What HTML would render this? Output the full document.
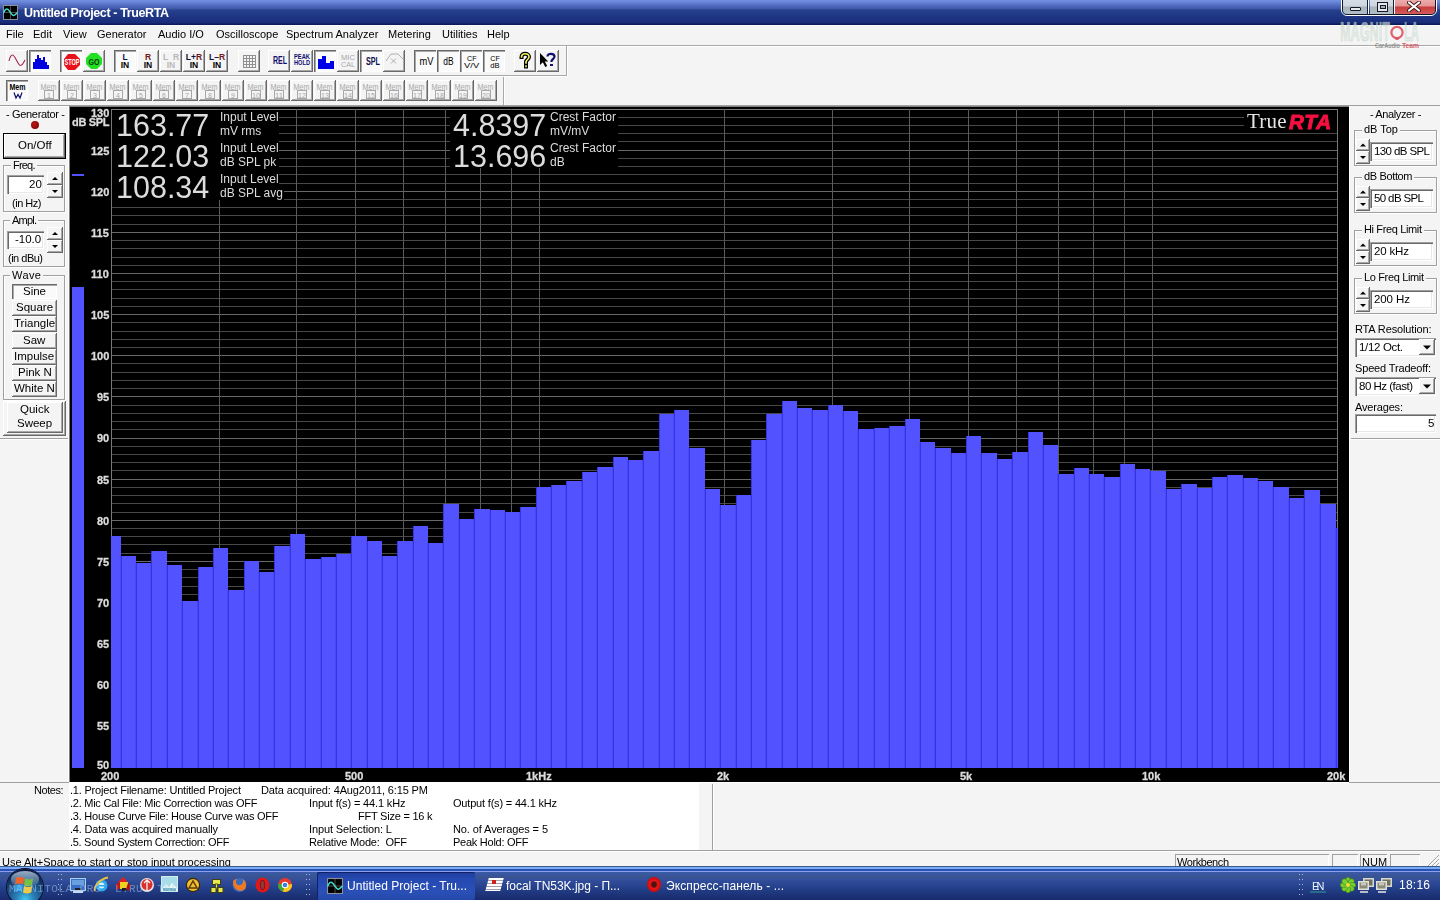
<!DOCTYPE html>
<html><head><meta charset="utf-8"><title>Untitled Project - TrueRTA</title>
<style>*{margin:0;padding:0;box-sizing:border-box}
html,body{width:1440px;height:900px;overflow:hidden}
body{position:relative;background:#f4f4f4;font-family:"Liberation Sans",sans-serif;font-size:11px;color:#000}
.a{position:absolute}
.t{position:absolute;white-space:pre;will-change:transform}
svg{display:block}</style></head>
<body>
<div class="a" style="left:0px;top:0px;width:1440px;height:25px;background:linear-gradient(#7391e3 0px,#6a86d8 2px,#556fc4 5px,#3e56a6 9px,#26408c 10px,#213a88 14px,#1c3280 19px,#182c78 23px,#0e1a5c 24px,#0e1a5c 25px);"></div>
<svg class="a" style="left:3px;top:5px" width="15" height="15" viewBox="0 0 15 15"><rect x="0" y="0" width="15" height="15" fill="#8a8f9a"/><rect x="1" y="1" width="13" height="13" fill="#000"/><line x1="7.5" y1="1" x2="7.5" y2="14" stroke="#6b5b4b" stroke-width="0.8"/><line x1="1" y1="7.5" x2="14" y2="7.5" stroke="#6b5b4b" stroke-width="0.8"/><path d="M0.5,8 C2,4 3.5,3.5 5,4.5 C7,6 8.5,10.5 10.5,10.5 C12,10.5 13,8.5 14.5,7.5" fill="none" stroke="#40e0d0" stroke-width="1.4"/></svg>
<div class="a" style="left:1341px;top:-3px;width:96px;height:19px;border:1px solid #fff;border-radius:0 0 6px 6px;overflow:hidden;">
<div class="a" style="left:0;top:0;width:94px;height:17px;border:1px solid #101828;border-top:none;border-radius:0 0 5px 5px;overflow:hidden;">
<div class="a" style="left:0;top:0;width:25px;height:17px;background:linear-gradient(#d8e0e8 0,#cdd6de 8px,#a8b4bc 9px,#b4c0c8 17px);border-right:1px solid #182030;box-shadow:1px 0 #fff;"></div>
<div class="a" style="left:27px;top:0;width:24px;height:17px;background:linear-gradient(#d8e0e8 0,#cdd6de 8px,#a8b4bc 9px,#b4c0c8 17px);border-right:1px solid #182030;box-shadow:1px 0 #fff;"></div>
<div class="a" style="left:52px;top:0;width:42px;height:17px;background:linear-gradient(#f0b4b4 0,#e49494 8px,#c83c3c 9px,#d86060 17px);"></div>
<div class="a" style="left:7px;top:9px;width:11px;height:4px;background:#e0e8ec;border:1px solid #181828;border-radius:1px;"></div>
<div class="a" style="left:34px;top:4px;width:11px;height:10px;background:#e0e8ec;border:1px solid #181828;"></div>
<div class="a" style="left:36.5px;top:6.5px;width:6px;height:4px;background:#a8b0b8;border:1px solid #181828;"></div>
</div></div>
<svg class="a" style="left:1407px;top:1px" width="14" height="11" viewBox="0 0 14 11"><path d="M2,1.5 L12,9.5 M12,1.5 L2,9.5" stroke="#401818" stroke-width="4" stroke-linecap="round"/><path d="M2,1.5 L12,9.5 M12,1.5 L2,9.5" stroke="#fff" stroke-width="2.2" stroke-linecap="round"/></svg>
<div class="a" style="left:0px;top:25px;width:1440px;height:1px;background:#fafafc;"></div>
<div class="a" style="left:0px;top:26px;width:1440px;height:1px;background:#f4f4ee;"></div>
<div class="a" style="left:0px;top:45px;width:1440px;height:1px;background:#a8a8a8;"></div>
<div class="a" style="left:0px;top:46px;width:1440px;height:1px;background:#fff;"></div>
<svg class="a" style="left:1336px;top:16px" width="90" height="34" viewBox="0 0 90 34">
<text x="4" y="24.5" font-family="Liberation Sans" font-weight="bold" font-size="28" textLength="50" lengthAdjust="spacingAndGlyphs" fill="rgba(214,232,220,0.6)" stroke="rgba(150,170,160,0.45)" stroke-width="0.6">MAGNIT</text>
<text x="68" y="24.5" font-family="Liberation Sans" font-weight="bold" font-size="28" textLength="15" lengthAdjust="spacingAndGlyphs" fill="rgba(214,232,220,0.6)" stroke="rgba(150,170,160,0.45)" stroke-width="0.6">LA</text>
<circle cx="61" cy="16.5" r="5.6" fill="none" stroke="rgba(222,80,95,0.9)" stroke-width="2.2"/>
<rect x="59.5" y="21" width="3" height="3" fill="rgba(222,80,95,0.9)"/>
<text x="39" y="31.5" font-family="Liberation Sans" font-weight="bold" font-size="7" textLength="25" lengthAdjust="spacingAndGlyphs" fill="rgba(130,130,130,0.85)">CarAudio</text>
<text x="66" y="31.5" font-family="Liberation Sans" font-weight="bold" font-size="7" textLength="17" lengthAdjust="spacingAndGlyphs" fill="rgba(210,70,85,0.9)">Team</text>
</svg>
<div class="a" style="left:6px;top:50px;width:22px;height:22px;background:#f4f4f4;box-shadow:inset -1px -1px #696969,inset 1px 1px #fff,inset -2px -2px #a8a8a8;"><svg class="a" style="left:0px;top:0px" width="22" height="22" viewBox="0 0 22 22" shape-rendering="crispEdges"><path d="M3,11 C4,6.5 5,5 6.5,5 C9,5 12,15.5 14.5,15.5 C16.5,15.5 18,12 19,10" fill="none" stroke="#a02850" stroke-width="1.1" shape-rendering="auto"/></svg></div>
<div class="a" style="left:29px;top:50px;width:22px;height:22px;background:#fafafa;box-shadow:inset 1px 1px #696969,inset 2px 2px #a8a8a8,inset -1px -1px #fff;"><svg class="a" style="left:0px;top:0px" width="22" height="22" viewBox="0 0 22 22" shape-rendering="crispEdges"><path d="M4,19 V12 H6 V9 H8 V5 H10 V8 H12 V10 H14 V7 H16 V12 H18 V15 H20 V19 Z" fill="#0000e0"/></svg></div>
<div class="a" style="left:60px;top:50px;width:22px;height:22px;background:#fafafa;box-shadow:inset 1px 1px #696969,inset 2px 2px #a8a8a8,inset -1px -1px #fff;"><svg class="a" style="left:0px;top:0px" width="22" height="22" viewBox="0 0 22 22" shape-rendering="crispEdges"><polygon points="8,4 15,4 20,9 20,15 15,20 8,20 4,15 4,9" fill="#e8101a" shape-rendering="auto"/><text x="4.5" y="15" font-family="Liberation Sans" font-weight="bold" font-size="8.5" fill="#fff" textLength="15" lengthAdjust="spacingAndGlyphs">STOP</text></svg></div>
<div class="a" style="left:83px;top:50px;width:22px;height:22px;background:#f4f4f4;box-shadow:inset -1px -1px #696969,inset 1px 1px #fff,inset -2px -2px #a8a8a8;"><svg class="a" style="left:0px;top:0px" width="22" height="22" viewBox="0 0 22 22" shape-rendering="crispEdges"><polygon points="8,3 14,3 19,8 19,14 14,19 8,19 3,14 3,8" fill="#22e022" shape-rendering="auto"/><text x="5.5" y="14.8" font-family="Liberation Sans" font-weight="bold" font-size="9" fill="#083808" textLength="11" lengthAdjust="spacingAndGlyphs">GO</text></svg></div>
<div class="a" style="left:114px;top:50px;width:22px;height:22px;background:#fafafa;box-shadow:inset 1px 1px #696969,inset 2px 2px #a8a8a8,inset -1px -1px #fff;"><svg class="a" style="left:0px;top:0px" width="22" height="22" viewBox="0 0 22 22" shape-rendering="crispEdges"><text x="11" y="10" font-family="Liberation Sans" font-weight="bold" font-size="8.5" text-anchor="middle" shape-rendering="auto"><tspan fill="#101050">L</tspan></text><text x="11" y="18" font-family="Liberation Sans" font-weight="bold" font-size="8.5" fill="#000" text-anchor="middle">IN</text></svg></div>
<div class="a" style="left:137px;top:50px;width:22px;height:22px;background:#f4f4f4;box-shadow:inset -1px -1px #696969,inset 1px 1px #fff,inset -2px -2px #a8a8a8;"><svg class="a" style="left:0px;top:0px" width="22" height="22" viewBox="0 0 22 22" shape-rendering="crispEdges"><text x="11" y="10" font-family="Liberation Sans" font-weight="bold" font-size="8.5" text-anchor="middle" shape-rendering="auto"><tspan fill="#701818">R</tspan></text><text x="11" y="18" font-family="Liberation Sans" font-weight="bold" font-size="8.5" fill="#000" text-anchor="middle">IN</text></svg></div>
<div class="a" style="left:160px;top:50px;width:22px;height:22px;background:#f4f4f4;box-shadow:inset -1px -1px #696969,inset 1px 1px #fff,inset -2px -2px #a8a8a8;"><svg class="a" style="left:0px;top:0px" width="22" height="22" viewBox="0 0 22 22" shape-rendering="crispEdges"><text x="11" y="10" font-family="Liberation Sans" font-size="8.5" fill="#b8b8b8" text-anchor="middle" font-weight="bold">L&#160;&#160;R</text><text x="11" y="18" font-family="Liberation Sans" font-weight="bold" font-size="8.5" fill="#b8b8b8" text-anchor="middle">IN</text></svg></div>
<div class="a" style="left:183px;top:50px;width:22px;height:22px;background:#f4f4f4;box-shadow:inset -1px -1px #696969,inset 1px 1px #fff,inset -2px -2px #a8a8a8;"><svg class="a" style="left:0px;top:0px" width="22" height="22" viewBox="0 0 22 22" shape-rendering="crispEdges"><text x="11" y="10" font-family="Liberation Sans" font-weight="bold" font-size="8.5" text-anchor="middle" shape-rendering="auto"><tspan fill="#101040">L+</tspan><tspan fill="#701818">R</tspan></text><text x="11" y="18" font-family="Liberation Sans" font-weight="bold" font-size="8.5" fill="#000" text-anchor="middle">IN</text></svg></div>
<div class="a" style="left:206px;top:50px;width:22px;height:22px;background:#f4f4f4;box-shadow:inset -1px -1px #696969,inset 1px 1px #fff,inset -2px -2px #a8a8a8;"><svg class="a" style="left:0px;top:0px" width="22" height="22" viewBox="0 0 22 22" shape-rendering="crispEdges"><text x="11" y="10" font-family="Liberation Sans" font-weight="bold" font-size="8.5" text-anchor="middle" shape-rendering="auto"><tspan fill="#101040">L–</tspan><tspan fill="#701818">R</tspan></text><text x="11" y="18" font-family="Liberation Sans" font-weight="bold" font-size="8.5" fill="#000" text-anchor="middle">IN</text></svg></div>
<div class="a" style="left:238px;top:50px;width:22px;height:22px;background:#f4f4f4;box-shadow:inset -1px -1px #696969,inset 1px 1px #fff,inset -2px -2px #a8a8a8;"><svg class="a" style="left:0px;top:0px" width="22" height="22" viewBox="0 0 22 22" shape-rendering="crispEdges"><rect x="5" y="5" width="1" height="13" fill="#909090"/><rect x="8" y="5" width="1" height="13" fill="#909090"/><rect x="11" y="5" width="1" height="13" fill="#909090"/><rect x="14" y="5" width="1" height="13" fill="#909090"/><rect x="17" y="5" width="1" height="13" fill="#909090"/><rect x="5" y="5" width="13" height="1" fill="#909090"/><rect x="5" y="8" width="13" height="1" fill="#909090"/><rect x="5" y="11" width="13" height="1" fill="#909090"/><rect x="5" y="14" width="13" height="1" fill="#909090"/><rect x="5" y="17" width="13" height="1" fill="#909090"/></svg></div>
<div class="a" style="left:268px;top:50px;width:22px;height:22px;background:#f4f4f4;box-shadow:inset -1px -1px #696969,inset 1px 1px #fff,inset -2px -2px #a8a8a8;"><svg class="a" style="left:0px;top:0px" width="22" height="22" viewBox="0 0 22 22" shape-rendering="crispEdges"><text x="5" y="14.2" font-family="Liberation Sans" font-weight="bold" font-size="10.5" fill="#101070" text-anchor="start" textLength="14" lengthAdjust="spacingAndGlyphs">REL</text></svg></div>
<div class="a" style="left:291px;top:50px;width:22px;height:22px;background:#f4f4f4;box-shadow:inset -1px -1px #696969,inset 1px 1px #fff,inset -2px -2px #a8a8a8;"><svg class="a" style="left:0px;top:0px" width="22" height="22" viewBox="0 0 22 22" shape-rendering="crispEdges"><text x="3" y="9.3" font-family="Liberation Sans" font-weight="bold" font-size="6.5" fill="#101070" text-anchor="start" textLength="16" lengthAdjust="spacingAndGlyphs">PEAK</text><text x="3" y="15.3" font-family="Liberation Sans" font-weight="bold" font-size="6.5" fill="#101070" text-anchor="start" textLength="16" lengthAdjust="spacingAndGlyphs">HOLD</text></svg></div>
<div class="a" style="left:314px;top:50px;width:22px;height:22px;background:#fafafa;box-shadow:inset 1px 1px #696969,inset 2px 2px #a8a8a8,inset -1px -1px #fff;"><svg class="a" style="left:0px;top:0px" width="22" height="22" viewBox="0 0 22 22" shape-rendering="crispEdges"><path d="M4,19 V9 H8 V6 H12 V13 H16 V11 H20 V19 Z" fill="#0000e8"/></svg></div>
<div class="a" style="left:337px;top:50px;width:22px;height:22px;background:#f4f4f4;box-shadow:inset -1px -1px #696969,inset 1px 1px #fff,inset -2px -2px #a8a8a8;"><svg class="a" style="left:0px;top:0px" width="22" height="22" viewBox="0 0 22 22" shape-rendering="crispEdges"><text x="4" y="10.2" font-family="Liberation Sans" font-weight="normal" font-size="7" fill="#a8a8a8" text-anchor="start" textLength="14" lengthAdjust="spacingAndGlyphs">MIC</text><text x="4" y="17.3" font-family="Liberation Sans" font-weight="normal" font-size="7" fill="#a8a8a8" text-anchor="start" textLength="14" lengthAdjust="spacingAndGlyphs">CAL</text></svg></div>
<div class="a" style="left:360px;top:50px;width:22px;height:22px;background:#fafafa;box-shadow:inset 1px 1px #696969,inset 2px 2px #a8a8a8,inset -1px -1px #fff;"><svg class="a" style="left:0px;top:0px" width="22" height="22" viewBox="0 0 22 22" shape-rendering="crispEdges"><text x="6" y="15.2" font-family="Liberation Sans" font-weight="bold" font-size="10" fill="#101050" text-anchor="start" textLength="14" lengthAdjust="spacingAndGlyphs">SPL</text></svg></div>
<div class="a" style="left:383px;top:50px;width:22px;height:22px;background:#f4f4f4;box-shadow:inset -1px -1px #696969,inset 1px 1px #fff,inset -2px -2px #a8a8a8;"><svg class="a" style="left:0px;top:0px" width="22" height="22" viewBox="0 0 22 22" shape-rendering="crispEdges"><path d="M3,11 L8,4 L15,4 L20,9" fill="none" stroke="#b0b0b0" stroke-width="1" shape-rendering="auto"/><path d="M8,8.5 L13,13.5 M13,8.5 L8,13.5" stroke="#b0b0b0" stroke-width="1" shape-rendering="auto"/></svg></div>
<div class="a" style="left:414px;top:50px;width:22px;height:22px;background:#fafafa;box-shadow:inset 1px 1px #696969,inset 2px 2px #a8a8a8,inset -1px -1px #fff;"><svg class="a" style="left:0px;top:0px" width="22" height="22" viewBox="0 0 22 22" shape-rendering="crispEdges"><text x="5.5" y="15.2" font-family="Liberation Sans" font-weight="normal" font-size="11" fill="#000" text-anchor="start" textLength="14" lengthAdjust="spacingAndGlyphs">mV</text></svg></div>
<div class="a" style="left:437px;top:50px;width:22px;height:22px;background:#fafafa;box-shadow:inset 1px 1px #696969,inset 2px 2px #a8a8a8,inset -1px -1px #fff;"><svg class="a" style="left:0px;top:0px" width="22" height="22" viewBox="0 0 22 22" shape-rendering="crispEdges"><text x="6.3" y="15.2" font-family="Liberation Sans" font-weight="normal" font-size="11" fill="#000" text-anchor="start" textLength="10.3" lengthAdjust="spacingAndGlyphs">dB</text></svg></div>
<div class="a" style="left:460px;top:50px;width:22px;height:22px;background:#fafafa;box-shadow:inset 1px 1px #696969,inset 2px 2px #a8a8a8,inset -1px -1px #fff;"><svg class="a" style="left:0px;top:0px" width="22" height="22" viewBox="0 0 22 22" shape-rendering="crispEdges"><text x="7" y="11" font-family="Liberation Sans" font-weight="normal" font-size="8" fill="#000" text-anchor="start" textLength="9.5" lengthAdjust="spacingAndGlyphs">CF</text><text x="4.1" y="18.2" font-family="Liberation Sans" font-weight="normal" font-size="8" fill="#000" text-anchor="start" textLength="15" lengthAdjust="spacingAndGlyphs">V/V</text></svg></div>
<div class="a" style="left:483px;top:50px;width:22px;height:22px;background:#fafafa;box-shadow:inset 1px 1px #696969,inset 2px 2px #a8a8a8,inset -1px -1px #fff;"><svg class="a" style="left:0px;top:0px" width="22" height="22" viewBox="0 0 22 22" shape-rendering="crispEdges"><text x="7.3" y="11" font-family="Liberation Sans" font-weight="normal" font-size="8" fill="#000" text-anchor="start" textLength="9.5" lengthAdjust="spacingAndGlyphs">CF</text><text x="7.3" y="18.2" font-family="Liberation Sans" font-weight="normal" font-size="8" fill="#000" text-anchor="start" textLength="9.3" lengthAdjust="spacingAndGlyphs">dB</text></svg></div>
<div class="a" style="left:514px;top:50px;width:22px;height:22px;background:#f4f4f4;box-shadow:inset -1px -1px #696969,inset 1px 1px #fff,inset -2px -2px #a8a8a8;"><svg class="a" style="left:0px;top:0px" width="22" height="22" viewBox="0 0 22 22" shape-rendering="crispEdges"><path d="M7.5,7 C7.5,4.5 9.5,3.8 11,3.8 C13.5,3.8 15,5.2 15,7 C15,9 12.5,10 12,11.5 L12,13 M12,16 L12,16.5" fill="none" stroke="#000" stroke-width="4" stroke-linecap="square" shape-rendering="auto"/><path d="M7.5,7 C7.5,4.5 9.5,3.8 11,3.8 C13.5,3.8 15,5.2 15,7 C15,9 12.5,10 12,11.5 L12,13 M12,16 L12,16.5" fill="none" stroke="#f4f45a" stroke-width="1.6" stroke-linecap="square" shape-rendering="auto"/></svg></div>
<div class="a" style="left:537px;top:50px;width:22px;height:22px;background:#f4f4f4;box-shadow:inset -1px -1px #696969,inset 1px 1px #fff,inset -2px -2px #a8a8a8;"><svg class="a" style="left:0px;top:0px" width="22" height="22" viewBox="0 0 22 22" shape-rendering="crispEdges"><path d="M3,3 L3,15 L5.8,12.3 L8.3,17 L10.2,16 L7.8,11.5 L11.2,11.5 Z" fill="#000" shape-rendering="auto"/><path d="M10.5,6.5 C10.5,4.5 12.2,3.8 14,3.8 C16.2,3.8 17.5,5 17.5,6.6 C17.5,8.6 15,9.2 14.5,11 L14.5,12" fill="none" stroke="#101070" stroke-width="2.2" shape-rendering="auto"/><rect x="13" y="13.5" width="3" height="2.2" fill="#101070"/></svg></div>
<div class="a" style="left:0px;top:75px;width:567px;height:1px;background:#a8a8a8;"></div>
<div class="a" style="left:0px;top:76px;width:567px;height:1px;background:#fff;"></div>
<div class="a" style="left:566px;top:46px;width:1px;height:30px;background:#a8a8a8;"></div>
<div class="a" style="left:567px;top:46px;width:1px;height:30px;background:#fff;"></div>
<div class="a" style="left:6px;top:80px;width:22px;height:21px;background:#fafafa;box-shadow:inset 1px 1px #696969,inset 2px 2px #a8a8a8,inset -1px -1px #fff;"><svg class="a" style="left:0px;top:0px" width="22" height="21" viewBox="0 0 22 21" shape-rendering="crispEdges"><text x="11.5" y="10" font-family="Liberation Sans" font-weight="bold" font-size="8.5" fill="#000" text-anchor="middle" textLength="16" lengthAdjust="spacingAndGlyphs">Mem</text><path d="M8,12.5 L10,18 L12,14.5 L14,18 L16,12.5" fill="none" stroke="#101070" stroke-width="1.2" shape-rendering="auto"/></svg></div>
<div class="a" style="left:38px;top:80px;width:22px;height:21px;background:#f4f4f4;box-shadow:inset -1px -1px #696969,inset 1px 1px #fff,inset -2px -2px #a8a8a8;"><svg class="a" style="left:0px;top:0px" width="22" height="21" viewBox="0 0 22 21" shape-rendering="crispEdges"><text x="10.5" y="9.5" font-family="Liberation Sans" font-size="8.5" fill="#a8a8a8" text-anchor="middle" textLength="16" lengthAdjust="spacingAndGlyphs">Mem</text><rect x="6.5" y="10.5" width="9" height="8" fill="none" stroke="#a8a8a8" stroke-width="1"/><text x="11" y="17.5" font-family="Liberation Sans" font-size="7" fill="#a8a8a8" text-anchor="middle" >1</text></svg></div>
<div class="a" style="left:61px;top:80px;width:22px;height:21px;background:#f4f4f4;box-shadow:inset -1px -1px #696969,inset 1px 1px #fff,inset -2px -2px #a8a8a8;"><svg class="a" style="left:0px;top:0px" width="22" height="21" viewBox="0 0 22 21" shape-rendering="crispEdges"><text x="10.5" y="9.5" font-family="Liberation Sans" font-size="8.5" fill="#a8a8a8" text-anchor="middle" textLength="16" lengthAdjust="spacingAndGlyphs">Mem</text><rect x="6.5" y="10.5" width="9" height="8" fill="none" stroke="#a8a8a8" stroke-width="1"/><text x="11" y="17.5" font-family="Liberation Sans" font-size="7" fill="#a8a8a8" text-anchor="middle" >2</text></svg></div>
<div class="a" style="left:84px;top:80px;width:22px;height:21px;background:#f4f4f4;box-shadow:inset -1px -1px #696969,inset 1px 1px #fff,inset -2px -2px #a8a8a8;"><svg class="a" style="left:0px;top:0px" width="22" height="21" viewBox="0 0 22 21" shape-rendering="crispEdges"><text x="10.5" y="9.5" font-family="Liberation Sans" font-size="8.5" fill="#a8a8a8" text-anchor="middle" textLength="16" lengthAdjust="spacingAndGlyphs">Mem</text><rect x="6.5" y="10.5" width="9" height="8" fill="none" stroke="#a8a8a8" stroke-width="1"/><text x="11" y="17.5" font-family="Liberation Sans" font-size="7" fill="#a8a8a8" text-anchor="middle" >3</text></svg></div>
<div class="a" style="left:107px;top:80px;width:22px;height:21px;background:#f4f4f4;box-shadow:inset -1px -1px #696969,inset 1px 1px #fff,inset -2px -2px #a8a8a8;"><svg class="a" style="left:0px;top:0px" width="22" height="21" viewBox="0 0 22 21" shape-rendering="crispEdges"><text x="10.5" y="9.5" font-family="Liberation Sans" font-size="8.5" fill="#a8a8a8" text-anchor="middle" textLength="16" lengthAdjust="spacingAndGlyphs">Mem</text><rect x="6.5" y="10.5" width="9" height="8" fill="none" stroke="#a8a8a8" stroke-width="1"/><text x="11" y="17.5" font-family="Liberation Sans" font-size="7" fill="#a8a8a8" text-anchor="middle" >4</text></svg></div>
<div class="a" style="left:130px;top:80px;width:22px;height:21px;background:#f4f4f4;box-shadow:inset -1px -1px #696969,inset 1px 1px #fff,inset -2px -2px #a8a8a8;"><svg class="a" style="left:0px;top:0px" width="22" height="21" viewBox="0 0 22 21" shape-rendering="crispEdges"><text x="10.5" y="9.5" font-family="Liberation Sans" font-size="8.5" fill="#a8a8a8" text-anchor="middle" textLength="16" lengthAdjust="spacingAndGlyphs">Mem</text><rect x="6.5" y="10.5" width="9" height="8" fill="none" stroke="#a8a8a8" stroke-width="1"/><text x="11" y="17.5" font-family="Liberation Sans" font-size="7" fill="#a8a8a8" text-anchor="middle" >5</text></svg></div>
<div class="a" style="left:153px;top:80px;width:22px;height:21px;background:#f4f4f4;box-shadow:inset -1px -1px #696969,inset 1px 1px #fff,inset -2px -2px #a8a8a8;"><svg class="a" style="left:0px;top:0px" width="22" height="21" viewBox="0 0 22 21" shape-rendering="crispEdges"><text x="10.5" y="9.5" font-family="Liberation Sans" font-size="8.5" fill="#a8a8a8" text-anchor="middle" textLength="16" lengthAdjust="spacingAndGlyphs">Mem</text><rect x="6.5" y="10.5" width="9" height="8" fill="none" stroke="#a8a8a8" stroke-width="1"/><text x="11" y="17.5" font-family="Liberation Sans" font-size="7" fill="#a8a8a8" text-anchor="middle" >6</text></svg></div>
<div class="a" style="left:176px;top:80px;width:22px;height:21px;background:#f4f4f4;box-shadow:inset -1px -1px #696969,inset 1px 1px #fff,inset -2px -2px #a8a8a8;"><svg class="a" style="left:0px;top:0px" width="22" height="21" viewBox="0 0 22 21" shape-rendering="crispEdges"><text x="10.5" y="9.5" font-family="Liberation Sans" font-size="8.5" fill="#a8a8a8" text-anchor="middle" textLength="16" lengthAdjust="spacingAndGlyphs">Mem</text><rect x="6.5" y="10.5" width="9" height="8" fill="none" stroke="#a8a8a8" stroke-width="1"/><text x="11" y="17.5" font-family="Liberation Sans" font-size="7" fill="#a8a8a8" text-anchor="middle" >7</text></svg></div>
<div class="a" style="left:199px;top:80px;width:22px;height:21px;background:#f4f4f4;box-shadow:inset -1px -1px #696969,inset 1px 1px #fff,inset -2px -2px #a8a8a8;"><svg class="a" style="left:0px;top:0px" width="22" height="21" viewBox="0 0 22 21" shape-rendering="crispEdges"><text x="10.5" y="9.5" font-family="Liberation Sans" font-size="8.5" fill="#a8a8a8" text-anchor="middle" textLength="16" lengthAdjust="spacingAndGlyphs">Mem</text><rect x="6.5" y="10.5" width="9" height="8" fill="none" stroke="#a8a8a8" stroke-width="1"/><text x="11" y="17.5" font-family="Liberation Sans" font-size="7" fill="#a8a8a8" text-anchor="middle" >8</text></svg></div>
<div class="a" style="left:222px;top:80px;width:22px;height:21px;background:#f4f4f4;box-shadow:inset -1px -1px #696969,inset 1px 1px #fff,inset -2px -2px #a8a8a8;"><svg class="a" style="left:0px;top:0px" width="22" height="21" viewBox="0 0 22 21" shape-rendering="crispEdges"><text x="10.5" y="9.5" font-family="Liberation Sans" font-size="8.5" fill="#a8a8a8" text-anchor="middle" textLength="16" lengthAdjust="spacingAndGlyphs">Mem</text><rect x="6.5" y="10.5" width="9" height="8" fill="none" stroke="#a8a8a8" stroke-width="1"/><text x="11" y="17.5" font-family="Liberation Sans" font-size="7" fill="#a8a8a8" text-anchor="middle" >9</text></svg></div>
<div class="a" style="left:245px;top:80px;width:22px;height:21px;background:#f4f4f4;box-shadow:inset -1px -1px #696969,inset 1px 1px #fff,inset -2px -2px #a8a8a8;"><svg class="a" style="left:0px;top:0px" width="22" height="21" viewBox="0 0 22 21" shape-rendering="crispEdges"><text x="10.5" y="9.5" font-family="Liberation Sans" font-size="8.5" fill="#a8a8a8" text-anchor="middle" textLength="16" lengthAdjust="spacingAndGlyphs">Mem</text><rect x="6.5" y="10.5" width="9" height="8" fill="none" stroke="#a8a8a8" stroke-width="1"/><text x="11" y="17.5" font-family="Liberation Sans" font-size="7" fill="#a8a8a8" text-anchor="middle" textLength="8" lengthAdjust="spacingAndGlyphs">10</text></svg></div>
<div class="a" style="left:268px;top:80px;width:22px;height:21px;background:#f4f4f4;box-shadow:inset -1px -1px #696969,inset 1px 1px #fff,inset -2px -2px #a8a8a8;"><svg class="a" style="left:0px;top:0px" width="22" height="21" viewBox="0 0 22 21" shape-rendering="crispEdges"><text x="10.5" y="9.5" font-family="Liberation Sans" font-size="8.5" fill="#a8a8a8" text-anchor="middle" textLength="16" lengthAdjust="spacingAndGlyphs">Mem</text><rect x="6.5" y="10.5" width="9" height="8" fill="none" stroke="#a8a8a8" stroke-width="1"/><text x="11" y="17.5" font-family="Liberation Sans" font-size="7" fill="#a8a8a8" text-anchor="middle" textLength="8" lengthAdjust="spacingAndGlyphs">11</text></svg></div>
<div class="a" style="left:291px;top:80px;width:22px;height:21px;background:#f4f4f4;box-shadow:inset -1px -1px #696969,inset 1px 1px #fff,inset -2px -2px #a8a8a8;"><svg class="a" style="left:0px;top:0px" width="22" height="21" viewBox="0 0 22 21" shape-rendering="crispEdges"><text x="10.5" y="9.5" font-family="Liberation Sans" font-size="8.5" fill="#a8a8a8" text-anchor="middle" textLength="16" lengthAdjust="spacingAndGlyphs">Mem</text><rect x="6.5" y="10.5" width="9" height="8" fill="none" stroke="#a8a8a8" stroke-width="1"/><text x="11" y="17.5" font-family="Liberation Sans" font-size="7" fill="#a8a8a8" text-anchor="middle" textLength="8" lengthAdjust="spacingAndGlyphs">12</text></svg></div>
<div class="a" style="left:314px;top:80px;width:22px;height:21px;background:#f4f4f4;box-shadow:inset -1px -1px #696969,inset 1px 1px #fff,inset -2px -2px #a8a8a8;"><svg class="a" style="left:0px;top:0px" width="22" height="21" viewBox="0 0 22 21" shape-rendering="crispEdges"><text x="10.5" y="9.5" font-family="Liberation Sans" font-size="8.5" fill="#a8a8a8" text-anchor="middle" textLength="16" lengthAdjust="spacingAndGlyphs">Mem</text><rect x="6.5" y="10.5" width="9" height="8" fill="none" stroke="#a8a8a8" stroke-width="1"/><text x="11" y="17.5" font-family="Liberation Sans" font-size="7" fill="#a8a8a8" text-anchor="middle" textLength="8" lengthAdjust="spacingAndGlyphs">13</text></svg></div>
<div class="a" style="left:337px;top:80px;width:22px;height:21px;background:#f4f4f4;box-shadow:inset -1px -1px #696969,inset 1px 1px #fff,inset -2px -2px #a8a8a8;"><svg class="a" style="left:0px;top:0px" width="22" height="21" viewBox="0 0 22 21" shape-rendering="crispEdges"><text x="10.5" y="9.5" font-family="Liberation Sans" font-size="8.5" fill="#a8a8a8" text-anchor="middle" textLength="16" lengthAdjust="spacingAndGlyphs">Mem</text><rect x="6.5" y="10.5" width="9" height="8" fill="none" stroke="#a8a8a8" stroke-width="1"/><text x="11" y="17.5" font-family="Liberation Sans" font-size="7" fill="#a8a8a8" text-anchor="middle" textLength="8" lengthAdjust="spacingAndGlyphs">14</text></svg></div>
<div class="a" style="left:360px;top:80px;width:22px;height:21px;background:#f4f4f4;box-shadow:inset -1px -1px #696969,inset 1px 1px #fff,inset -2px -2px #a8a8a8;"><svg class="a" style="left:0px;top:0px" width="22" height="21" viewBox="0 0 22 21" shape-rendering="crispEdges"><text x="10.5" y="9.5" font-family="Liberation Sans" font-size="8.5" fill="#a8a8a8" text-anchor="middle" textLength="16" lengthAdjust="spacingAndGlyphs">Mem</text><rect x="6.5" y="10.5" width="9" height="8" fill="none" stroke="#a8a8a8" stroke-width="1"/><text x="11" y="17.5" font-family="Liberation Sans" font-size="7" fill="#a8a8a8" text-anchor="middle" textLength="8" lengthAdjust="spacingAndGlyphs">15</text></svg></div>
<div class="a" style="left:383px;top:80px;width:22px;height:21px;background:#f4f4f4;box-shadow:inset -1px -1px #696969,inset 1px 1px #fff,inset -2px -2px #a8a8a8;"><svg class="a" style="left:0px;top:0px" width="22" height="21" viewBox="0 0 22 21" shape-rendering="crispEdges"><text x="10.5" y="9.5" font-family="Liberation Sans" font-size="8.5" fill="#a8a8a8" text-anchor="middle" textLength="16" lengthAdjust="spacingAndGlyphs">Mem</text><rect x="6.5" y="10.5" width="9" height="8" fill="none" stroke="#a8a8a8" stroke-width="1"/><text x="11" y="17.5" font-family="Liberation Sans" font-size="7" fill="#a8a8a8" text-anchor="middle" textLength="8" lengthAdjust="spacingAndGlyphs">16</text></svg></div>
<div class="a" style="left:406px;top:80px;width:22px;height:21px;background:#f4f4f4;box-shadow:inset -1px -1px #696969,inset 1px 1px #fff,inset -2px -2px #a8a8a8;"><svg class="a" style="left:0px;top:0px" width="22" height="21" viewBox="0 0 22 21" shape-rendering="crispEdges"><text x="10.5" y="9.5" font-family="Liberation Sans" font-size="8.5" fill="#a8a8a8" text-anchor="middle" textLength="16" lengthAdjust="spacingAndGlyphs">Mem</text><rect x="6.5" y="10.5" width="9" height="8" fill="none" stroke="#a8a8a8" stroke-width="1"/><text x="11" y="17.5" font-family="Liberation Sans" font-size="7" fill="#a8a8a8" text-anchor="middle" textLength="8" lengthAdjust="spacingAndGlyphs">17</text></svg></div>
<div class="a" style="left:429px;top:80px;width:22px;height:21px;background:#f4f4f4;box-shadow:inset -1px -1px #696969,inset 1px 1px #fff,inset -2px -2px #a8a8a8;"><svg class="a" style="left:0px;top:0px" width="22" height="21" viewBox="0 0 22 21" shape-rendering="crispEdges"><text x="10.5" y="9.5" font-family="Liberation Sans" font-size="8.5" fill="#a8a8a8" text-anchor="middle" textLength="16" lengthAdjust="spacingAndGlyphs">Mem</text><rect x="6.5" y="10.5" width="9" height="8" fill="none" stroke="#a8a8a8" stroke-width="1"/><text x="11" y="17.5" font-family="Liberation Sans" font-size="7" fill="#a8a8a8" text-anchor="middle" textLength="8" lengthAdjust="spacingAndGlyphs">18</text></svg></div>
<div class="a" style="left:452px;top:80px;width:22px;height:21px;background:#f4f4f4;box-shadow:inset -1px -1px #696969,inset 1px 1px #fff,inset -2px -2px #a8a8a8;"><svg class="a" style="left:0px;top:0px" width="22" height="21" viewBox="0 0 22 21" shape-rendering="crispEdges"><text x="10.5" y="9.5" font-family="Liberation Sans" font-size="8.5" fill="#a8a8a8" text-anchor="middle" textLength="16" lengthAdjust="spacingAndGlyphs">Mem</text><rect x="6.5" y="10.5" width="9" height="8" fill="none" stroke="#a8a8a8" stroke-width="1"/><text x="11" y="17.5" font-family="Liberation Sans" font-size="7" fill="#a8a8a8" text-anchor="middle" textLength="8" lengthAdjust="spacingAndGlyphs">19</text></svg></div>
<div class="a" style="left:475px;top:80px;width:22px;height:21px;background:#f4f4f4;box-shadow:inset -1px -1px #696969,inset 1px 1px #fff,inset -2px -2px #a8a8a8;"><svg class="a" style="left:0px;top:0px" width="22" height="21" viewBox="0 0 22 21" shape-rendering="crispEdges"><text x="10.5" y="9.5" font-family="Liberation Sans" font-size="8.5" fill="#a8a8a8" text-anchor="middle" textLength="16" lengthAdjust="spacingAndGlyphs">Mem</text><rect x="6.5" y="10.5" width="9" height="8" fill="none" stroke="#a8a8a8" stroke-width="1"/><text x="11" y="17.5" font-family="Liberation Sans" font-size="7" fill="#a8a8a8" text-anchor="middle" textLength="8" lengthAdjust="spacingAndGlyphs">20</text></svg></div>
<div class="a" style="left:503px;top:77px;width:1px;height:28px;background:#a8a8a8;"></div>
<div class="a" style="left:504px;top:77px;width:1px;height:28px;background:#fff;"></div>
<div class="a" style="left:0px;top:105px;width:1440px;height:1px;background:#a0a0a0;"></div>
<div class="a" style="left:69px;top:106px;width:1px;height:676px;background:#808080;"></div>
<div class="a" style="left:69px;top:106px;width:1280px;height:1px;background:#808080;"></div>
<div class="a" style="left:70px;top:107px;width:1279px;height:675px;background:#000;"></div>
<svg class="a" style="left:0;top:0" width="1440" height="900" viewBox="0 0 1440 900" shape-rendering="crispEdges"><rect x="111" y="109" width="1227" height="1" fill="#787878"/><rect x="111" y="117" width="1227" height="1" fill="#484848"/><rect x="111" y="125" width="1227" height="1" fill="#484848"/><rect x="111" y="133" width="1227" height="1" fill="#484848"/><rect x="111" y="141" width="1227" height="1" fill="#484848"/><rect x="111" y="150" width="1227" height="1" fill="#686868"/><rect x="111" y="158" width="1227" height="1" fill="#484848"/><rect x="111" y="166" width="1227" height="1" fill="#484848"/><rect x="111" y="174" width="1227" height="1" fill="#484848"/><rect x="111" y="183" width="1227" height="1" fill="#484848"/><rect x="111" y="191" width="1227" height="1" fill="#686868"/><rect x="111" y="199" width="1227" height="1" fill="#484848"/><rect x="111" y="207" width="1227" height="1" fill="#484848"/><rect x="111" y="215" width="1227" height="1" fill="#484848"/><rect x="111" y="224" width="1227" height="1" fill="#484848"/><rect x="111" y="232" width="1227" height="1" fill="#686868"/><rect x="111" y="240" width="1227" height="1" fill="#484848"/><rect x="111" y="248" width="1227" height="1" fill="#484848"/><rect x="111" y="257" width="1227" height="1" fill="#484848"/><rect x="111" y="265" width="1227" height="1" fill="#484848"/><rect x="111" y="273" width="1227" height="1" fill="#686868"/><rect x="111" y="281" width="1227" height="1" fill="#484848"/><rect x="111" y="289" width="1227" height="1" fill="#484848"/><rect x="111" y="298" width="1227" height="1" fill="#484848"/><rect x="111" y="306" width="1227" height="1" fill="#484848"/><rect x="111" y="314" width="1227" height="1" fill="#686868"/><rect x="111" y="322" width="1227" height="1" fill="#484848"/><rect x="111" y="331" width="1227" height="1" fill="#484848"/><rect x="111" y="339" width="1227" height="1" fill="#484848"/><rect x="111" y="347" width="1227" height="1" fill="#484848"/><rect x="111" y="355" width="1227" height="1" fill="#686868"/><rect x="111" y="363" width="1227" height="1" fill="#484848"/><rect x="111" y="372" width="1227" height="1" fill="#484848"/><rect x="111" y="380" width="1227" height="1" fill="#484848"/><rect x="111" y="388" width="1227" height="1" fill="#484848"/><rect x="111" y="396" width="1227" height="1" fill="#686868"/><rect x="111" y="405" width="1227" height="1" fill="#484848"/><rect x="111" y="413" width="1227" height="1" fill="#484848"/><rect x="111" y="421" width="1227" height="1" fill="#484848"/><rect x="111" y="429" width="1227" height="1" fill="#484848"/><rect x="111" y="438" width="1227" height="1" fill="#686868"/><rect x="111" y="446" width="1227" height="1" fill="#484848"/><rect x="111" y="454" width="1227" height="1" fill="#484848"/><rect x="111" y="462" width="1227" height="1" fill="#484848"/><rect x="111" y="470" width="1227" height="1" fill="#484848"/><rect x="111" y="479" width="1227" height="1" fill="#686868"/><rect x="111" y="487" width="1227" height="1" fill="#484848"/><rect x="111" y="495" width="1227" height="1" fill="#484848"/><rect x="111" y="503" width="1227" height="1" fill="#484848"/><rect x="111" y="512" width="1227" height="1" fill="#484848"/><rect x="111" y="520" width="1227" height="1" fill="#686868"/><rect x="111" y="528" width="1227" height="1" fill="#484848"/><rect x="111" y="536" width="1227" height="1" fill="#484848"/><rect x="111" y="544" width="1227" height="1" fill="#484848"/><rect x="111" y="553" width="1227" height="1" fill="#484848"/><rect x="111" y="561" width="1227" height="1" fill="#686868"/><rect x="111" y="569" width="1227" height="1" fill="#484848"/><rect x="111" y="577" width="1227" height="1" fill="#484848"/><rect x="111" y="586" width="1227" height="1" fill="#484848"/><rect x="111" y="594" width="1227" height="1" fill="#484848"/><rect x="111" y="602" width="1227" height="1" fill="#686868"/><rect x="111" y="610" width="1227" height="1" fill="#484848"/><rect x="111" y="618" width="1227" height="1" fill="#484848"/><rect x="111" y="627" width="1227" height="1" fill="#484848"/><rect x="111" y="635" width="1227" height="1" fill="#484848"/><rect x="111" y="643" width="1227" height="1" fill="#686868"/><rect x="111" y="651" width="1227" height="1" fill="#484848"/><rect x="111" y="660" width="1227" height="1" fill="#484848"/><rect x="111" y="668" width="1227" height="1" fill="#484848"/><rect x="111" y="676" width="1227" height="1" fill="#484848"/><rect x="111" y="684" width="1227" height="1" fill="#686868"/><rect x="111" y="692" width="1227" height="1" fill="#484848"/><rect x="111" y="701" width="1227" height="1" fill="#484848"/><rect x="111" y="709" width="1227" height="1" fill="#484848"/><rect x="111" y="717" width="1227" height="1" fill="#484848"/><rect x="111" y="725" width="1227" height="1" fill="#686868"/><rect x="111" y="734" width="1227" height="1" fill="#484848"/><rect x="111" y="742" width="1227" height="1" fill="#484848"/><rect x="111" y="750" width="1227" height="1" fill="#484848"/><rect x="111" y="758" width="1227" height="1" fill="#484848"/><rect x="111" y="767" width="1227" height="1" fill="#686868"/><rect x="219" y="109" width="1" height="658" fill="#5a5a5a"/><rect x="296" y="109" width="1" height="658" fill="#5a5a5a"/><rect x="355" y="109" width="1" height="658" fill="#5a5a5a"/><rect x="403" y="109" width="1" height="658" fill="#5a5a5a"/><rect x="445" y="109" width="1" height="658" fill="#5a5a5a"/><rect x="480" y="109" width="1" height="658" fill="#5a5a5a"/><rect x="511" y="109" width="1" height="658" fill="#5a5a5a"/><rect x="539" y="109" width="1" height="658" fill="#5a5a5a"/><rect x="724" y="109" width="1" height="658" fill="#5a5a5a"/><rect x="832" y="109" width="1" height="658" fill="#5a5a5a"/><rect x="909" y="109" width="1" height="658" fill="#5a5a5a"/><rect x="968" y="109" width="1" height="658" fill="#5a5a5a"/><rect x="1016" y="109" width="1" height="658" fill="#5a5a5a"/><rect x="1058" y="109" width="1" height="658" fill="#5a5a5a"/><rect x="1093" y="109" width="1" height="658" fill="#5a5a5a"/><rect x="1124" y="109" width="1" height="658" fill="#5a5a5a"/><rect x="1152" y="109" width="1" height="658" fill="#5a5a5a"/><rect x="111" y="109" width="1" height="659" fill="#787878"/><rect x="1337" y="109" width="1" height="659" fill="#787878"/><rect x="112" y="110" width="167" height="90" fill="#000"/><rect x="279" y="186" width="5" height="14" fill="#000"/><rect x="450" y="110" width="168" height="58" fill="#000"/><rect x="1244" y="110" width="93" height="21" fill="#000"/><rect x="111" y="536" width="10" height="232" fill="#5252ff"/><rect x="121" y="556" width="15" height="212" fill="#5252ff"/><rect x="121" y="556" width="1" height="212" fill="#3434e4"/><rect x="120" y="556" width="1" height="212" fill="#4848f8"/><rect x="136" y="563" width="15" height="205" fill="#5252ff"/><rect x="136" y="563" width="1" height="205" fill="#3434e4"/><rect x="135" y="563" width="1" height="205" fill="#4848f8"/><rect x="151" y="551" width="16" height="217" fill="#5252ff"/><rect x="151" y="551" width="1" height="217" fill="#3434e4"/><rect x="150" y="563" width="1" height="205" fill="#4848f8"/><rect x="167" y="565" width="15" height="203" fill="#5252ff"/><rect x="167" y="565" width="1" height="203" fill="#3434e4"/><rect x="166" y="565" width="1" height="203" fill="#4848f8"/><rect x="182" y="601" width="16" height="167" fill="#5252ff"/><rect x="182" y="601" width="1" height="167" fill="#3434e4"/><rect x="181" y="601" width="1" height="167" fill="#4848f8"/><rect x="198" y="567" width="15" height="201" fill="#5252ff"/><rect x="198" y="567" width="1" height="201" fill="#3434e4"/><rect x="197" y="601" width="1" height="167" fill="#4848f8"/><rect x="213" y="548" width="15" height="220" fill="#5252ff"/><rect x="213" y="548" width="1" height="220" fill="#3434e4"/><rect x="212" y="567" width="1" height="201" fill="#4848f8"/><rect x="228" y="590" width="16" height="178" fill="#5252ff"/><rect x="228" y="590" width="1" height="178" fill="#3434e4"/><rect x="227" y="590" width="1" height="178" fill="#4848f8"/><rect x="244" y="561" width="15" height="207" fill="#5252ff"/><rect x="244" y="561" width="1" height="207" fill="#3434e4"/><rect x="243" y="590" width="1" height="178" fill="#4848f8"/><rect x="259" y="572" width="15" height="196" fill="#5252ff"/><rect x="259" y="572" width="1" height="196" fill="#3434e4"/><rect x="258" y="572" width="1" height="196" fill="#4848f8"/><rect x="274" y="546" width="16" height="222" fill="#5252ff"/><rect x="274" y="546" width="1" height="222" fill="#3434e4"/><rect x="273" y="572" width="1" height="196" fill="#4848f8"/><rect x="290" y="534" width="15" height="234" fill="#5252ff"/><rect x="290" y="534" width="1" height="234" fill="#3434e4"/><rect x="289" y="546" width="1" height="222" fill="#4848f8"/><rect x="305" y="559" width="16" height="209" fill="#5252ff"/><rect x="305" y="559" width="1" height="209" fill="#3434e4"/><rect x="304" y="559" width="1" height="209" fill="#4848f8"/><rect x="321" y="557" width="15" height="211" fill="#5252ff"/><rect x="321" y="557" width="1" height="211" fill="#3434e4"/><rect x="320" y="559" width="1" height="209" fill="#4848f8"/><rect x="336" y="554" width="15" height="214" fill="#5252ff"/><rect x="336" y="554" width="1" height="214" fill="#3434e4"/><rect x="335" y="557" width="1" height="211" fill="#4848f8"/><rect x="351" y="536" width="16" height="232" fill="#5252ff"/><rect x="351" y="536" width="1" height="232" fill="#3434e4"/><rect x="350" y="554" width="1" height="214" fill="#4848f8"/><rect x="367" y="541" width="15" height="227" fill="#5252ff"/><rect x="367" y="541" width="1" height="227" fill="#3434e4"/><rect x="366" y="541" width="1" height="227" fill="#4848f8"/><rect x="382" y="556" width="15" height="212" fill="#5252ff"/><rect x="382" y="556" width="1" height="212" fill="#3434e4"/><rect x="381" y="556" width="1" height="212" fill="#4848f8"/><rect x="397" y="541" width="16" height="227" fill="#5252ff"/><rect x="397" y="541" width="1" height="227" fill="#3434e4"/><rect x="396" y="556" width="1" height="212" fill="#4848f8"/><rect x="413" y="526" width="15" height="242" fill="#5252ff"/><rect x="413" y="526" width="1" height="242" fill="#3434e4"/><rect x="412" y="541" width="1" height="227" fill="#4848f8"/><rect x="428" y="543" width="15" height="225" fill="#5252ff"/><rect x="428" y="543" width="1" height="225" fill="#3434e4"/><rect x="427" y="543" width="1" height="225" fill="#4848f8"/><rect x="443" y="504" width="16" height="264" fill="#5252ff"/><rect x="443" y="504" width="1" height="264" fill="#3434e4"/><rect x="442" y="543" width="1" height="225" fill="#4848f8"/><rect x="459" y="519" width="15" height="249" fill="#5252ff"/><rect x="459" y="519" width="1" height="249" fill="#3434e4"/><rect x="458" y="519" width="1" height="249" fill="#4848f8"/><rect x="474" y="509" width="16" height="259" fill="#5252ff"/><rect x="474" y="509" width="1" height="259" fill="#3434e4"/><rect x="473" y="519" width="1" height="249" fill="#4848f8"/><rect x="490" y="510" width="15" height="258" fill="#5252ff"/><rect x="490" y="510" width="1" height="258" fill="#3434e4"/><rect x="489" y="510" width="1" height="258" fill="#4848f8"/><rect x="505" y="512" width="15" height="256" fill="#5252ff"/><rect x="505" y="512" width="1" height="256" fill="#3434e4"/><rect x="504" y="512" width="1" height="256" fill="#4848f8"/><rect x="520" y="507" width="16" height="261" fill="#5252ff"/><rect x="520" y="507" width="1" height="261" fill="#3434e4"/><rect x="519" y="512" width="1" height="256" fill="#4848f8"/><rect x="536" y="487" width="15" height="281" fill="#5252ff"/><rect x="536" y="487" width="1" height="281" fill="#3434e4"/><rect x="535" y="507" width="1" height="261" fill="#4848f8"/><rect x="551" y="485" width="15" height="283" fill="#5252ff"/><rect x="551" y="485" width="1" height="283" fill="#3434e4"/><rect x="550" y="487" width="1" height="281" fill="#4848f8"/><rect x="566" y="481" width="16" height="287" fill="#5252ff"/><rect x="566" y="481" width="1" height="287" fill="#3434e4"/><rect x="565" y="485" width="1" height="283" fill="#4848f8"/><rect x="582" y="472" width="15" height="296" fill="#5252ff"/><rect x="582" y="472" width="1" height="296" fill="#3434e4"/><rect x="581" y="481" width="1" height="287" fill="#4848f8"/><rect x="597" y="467" width="16" height="301" fill="#5252ff"/><rect x="597" y="467" width="1" height="301" fill="#3434e4"/><rect x="596" y="472" width="1" height="296" fill="#4848f8"/><rect x="613" y="457" width="15" height="311" fill="#5252ff"/><rect x="613" y="457" width="1" height="311" fill="#3434e4"/><rect x="612" y="467" width="1" height="301" fill="#4848f8"/><rect x="628" y="460" width="15" height="308" fill="#5252ff"/><rect x="628" y="460" width="1" height="308" fill="#3434e4"/><rect x="627" y="460" width="1" height="308" fill="#4848f8"/><rect x="643" y="451" width="16" height="317" fill="#5252ff"/><rect x="643" y="451" width="1" height="317" fill="#3434e4"/><rect x="642" y="460" width="1" height="308" fill="#4848f8"/><rect x="659" y="414" width="15" height="354" fill="#5252ff"/><rect x="659" y="414" width="1" height="354" fill="#3434e4"/><rect x="658" y="451" width="1" height="317" fill="#4848f8"/><rect x="674" y="410" width="15" height="358" fill="#5252ff"/><rect x="674" y="410" width="1" height="358" fill="#3434e4"/><rect x="673" y="414" width="1" height="354" fill="#4848f8"/><rect x="689" y="448" width="16" height="320" fill="#5252ff"/><rect x="689" y="448" width="1" height="320" fill="#3434e4"/><rect x="688" y="448" width="1" height="320" fill="#4848f8"/><rect x="705" y="489" width="15" height="279" fill="#5252ff"/><rect x="705" y="489" width="1" height="279" fill="#3434e4"/><rect x="704" y="489" width="1" height="279" fill="#4848f8"/><rect x="720" y="505" width="16" height="263" fill="#5252ff"/><rect x="720" y="505" width="1" height="263" fill="#3434e4"/><rect x="719" y="505" width="1" height="263" fill="#4848f8"/><rect x="736" y="495" width="15" height="273" fill="#5252ff"/><rect x="736" y="495" width="1" height="273" fill="#3434e4"/><rect x="735" y="505" width="1" height="263" fill="#4848f8"/><rect x="751" y="440" width="15" height="328" fill="#5252ff"/><rect x="751" y="440" width="1" height="328" fill="#3434e4"/><rect x="750" y="495" width="1" height="273" fill="#4848f8"/><rect x="766" y="414" width="16" height="354" fill="#5252ff"/><rect x="766" y="414" width="1" height="354" fill="#3434e4"/><rect x="765" y="440" width="1" height="328" fill="#4848f8"/><rect x="782" y="401" width="15" height="367" fill="#5252ff"/><rect x="782" y="401" width="1" height="367" fill="#3434e4"/><rect x="781" y="414" width="1" height="354" fill="#4848f8"/><rect x="797" y="408" width="15" height="360" fill="#5252ff"/><rect x="797" y="408" width="1" height="360" fill="#3434e4"/><rect x="796" y="408" width="1" height="360" fill="#4848f8"/><rect x="812" y="410" width="16" height="358" fill="#5252ff"/><rect x="812" y="410" width="1" height="358" fill="#3434e4"/><rect x="811" y="410" width="1" height="358" fill="#4848f8"/><rect x="828" y="405" width="15" height="363" fill="#5252ff"/><rect x="828" y="405" width="1" height="363" fill="#3434e4"/><rect x="827" y="410" width="1" height="358" fill="#4848f8"/><rect x="843" y="411" width="15" height="357" fill="#5252ff"/><rect x="843" y="411" width="1" height="357" fill="#3434e4"/><rect x="842" y="411" width="1" height="357" fill="#4848f8"/><rect x="858" y="429" width="16" height="339" fill="#5252ff"/><rect x="858" y="429" width="1" height="339" fill="#3434e4"/><rect x="857" y="429" width="1" height="339" fill="#4848f8"/><rect x="874" y="428" width="15" height="340" fill="#5252ff"/><rect x="874" y="428" width="1" height="340" fill="#3434e4"/><rect x="873" y="429" width="1" height="339" fill="#4848f8"/><rect x="889" y="426" width="16" height="342" fill="#5252ff"/><rect x="889" y="426" width="1" height="342" fill="#3434e4"/><rect x="888" y="428" width="1" height="340" fill="#4848f8"/><rect x="905" y="419" width="15" height="349" fill="#5252ff"/><rect x="905" y="419" width="1" height="349" fill="#3434e4"/><rect x="904" y="426" width="1" height="342" fill="#4848f8"/><rect x="920" y="442" width="15" height="326" fill="#5252ff"/><rect x="920" y="442" width="1" height="326" fill="#3434e4"/><rect x="919" y="442" width="1" height="326" fill="#4848f8"/><rect x="935" y="448" width="16" height="320" fill="#5252ff"/><rect x="935" y="448" width="1" height="320" fill="#3434e4"/><rect x="934" y="448" width="1" height="320" fill="#4848f8"/><rect x="951" y="453" width="15" height="315" fill="#5252ff"/><rect x="951" y="453" width="1" height="315" fill="#3434e4"/><rect x="950" y="453" width="1" height="315" fill="#4848f8"/><rect x="966" y="436" width="15" height="332" fill="#5252ff"/><rect x="966" y="436" width="1" height="332" fill="#3434e4"/><rect x="965" y="453" width="1" height="315" fill="#4848f8"/><rect x="981" y="453" width="16" height="315" fill="#5252ff"/><rect x="981" y="453" width="1" height="315" fill="#3434e4"/><rect x="980" y="453" width="1" height="315" fill="#4848f8"/><rect x="997" y="459" width="15" height="309" fill="#5252ff"/><rect x="997" y="459" width="1" height="309" fill="#3434e4"/><rect x="996" y="459" width="1" height="309" fill="#4848f8"/><rect x="1012" y="452" width="16" height="316" fill="#5252ff"/><rect x="1012" y="452" width="1" height="316" fill="#3434e4"/><rect x="1011" y="459" width="1" height="309" fill="#4848f8"/><rect x="1028" y="432" width="15" height="336" fill="#5252ff"/><rect x="1028" y="432" width="1" height="336" fill="#3434e4"/><rect x="1027" y="452" width="1" height="316" fill="#4848f8"/><rect x="1043" y="445" width="15" height="323" fill="#5252ff"/><rect x="1043" y="445" width="1" height="323" fill="#3434e4"/><rect x="1042" y="445" width="1" height="323" fill="#4848f8"/><rect x="1058" y="474" width="16" height="294" fill="#5252ff"/><rect x="1058" y="474" width="1" height="294" fill="#3434e4"/><rect x="1057" y="474" width="1" height="294" fill="#4848f8"/><rect x="1074" y="468" width="15" height="300" fill="#5252ff"/><rect x="1074" y="468" width="1" height="300" fill="#3434e4"/><rect x="1073" y="474" width="1" height="294" fill="#4848f8"/><rect x="1089" y="474" width="15" height="294" fill="#5252ff"/><rect x="1089" y="474" width="1" height="294" fill="#3434e4"/><rect x="1088" y="474" width="1" height="294" fill="#4848f8"/><rect x="1104" y="477" width="16" height="291" fill="#5252ff"/><rect x="1104" y="477" width="1" height="291" fill="#3434e4"/><rect x="1103" y="477" width="1" height="291" fill="#4848f8"/><rect x="1120" y="464" width="15" height="304" fill="#5252ff"/><rect x="1120" y="464" width="1" height="304" fill="#3434e4"/><rect x="1119" y="477" width="1" height="291" fill="#4848f8"/><rect x="1135" y="469" width="15" height="299" fill="#5252ff"/><rect x="1135" y="469" width="1" height="299" fill="#3434e4"/><rect x="1134" y="469" width="1" height="299" fill="#4848f8"/><rect x="1150" y="471" width="16" height="297" fill="#5252ff"/><rect x="1150" y="471" width="1" height="297" fill="#3434e4"/><rect x="1149" y="471" width="1" height="297" fill="#4848f8"/><rect x="1166" y="489" width="15" height="279" fill="#5252ff"/><rect x="1166" y="489" width="1" height="279" fill="#3434e4"/><rect x="1165" y="489" width="1" height="279" fill="#4848f8"/><rect x="1181" y="484" width="16" height="284" fill="#5252ff"/><rect x="1181" y="484" width="1" height="284" fill="#3434e4"/><rect x="1180" y="489" width="1" height="279" fill="#4848f8"/><rect x="1197" y="488" width="15" height="280" fill="#5252ff"/><rect x="1197" y="488" width="1" height="280" fill="#3434e4"/><rect x="1196" y="488" width="1" height="280" fill="#4848f8"/><rect x="1212" y="477" width="15" height="291" fill="#5252ff"/><rect x="1212" y="477" width="1" height="291" fill="#3434e4"/><rect x="1211" y="488" width="1" height="280" fill="#4848f8"/><rect x="1227" y="475" width="16" height="293" fill="#5252ff"/><rect x="1227" y="475" width="1" height="293" fill="#3434e4"/><rect x="1226" y="477" width="1" height="291" fill="#4848f8"/><rect x="1243" y="478" width="15" height="290" fill="#5252ff"/><rect x="1243" y="478" width="1" height="290" fill="#3434e4"/><rect x="1242" y="478" width="1" height="290" fill="#4848f8"/><rect x="1258" y="481" width="15" height="287" fill="#5252ff"/><rect x="1258" y="481" width="1" height="287" fill="#3434e4"/><rect x="1257" y="481" width="1" height="287" fill="#4848f8"/><rect x="1273" y="487" width="16" height="281" fill="#5252ff"/><rect x="1273" y="487" width="1" height="281" fill="#3434e4"/><rect x="1272" y="487" width="1" height="281" fill="#4848f8"/><rect x="1289" y="498" width="15" height="270" fill="#5252ff"/><rect x="1289" y="498" width="1" height="270" fill="#3434e4"/><rect x="1288" y="498" width="1" height="270" fill="#4848f8"/><rect x="1304" y="490" width="16" height="278" fill="#5252ff"/><rect x="1304" y="490" width="1" height="278" fill="#3434e4"/><rect x="1303" y="498" width="1" height="270" fill="#4848f8"/><rect x="1320" y="504" width="16" height="264" fill="#5252ff"/><rect x="1320" y="504" width="1" height="264" fill="#3434e4"/><rect x="1319" y="504" width="1" height="264" fill="#4848f8"/><rect x="1336" y="528" width="2" height="240" fill="#5252ff"/><rect x="1336" y="528" width="1" height="240" fill="#3434e4"/><rect x="1335" y="528" width="1" height="240" fill="#4848f8"/><rect x="72" y="287" width="12" height="481" fill="#5252ff"/><rect x="72" y="174" width="12" height="2" fill="#5252ff"/></svg>
<div class="a" style="left:0px;top:106px;width:69px;height:676px;background:#f4f4f4;"></div>
<div class="a" style="left:0px;top:106px;width:68px;height:1px;background:#fff;"></div>
<div class="a" style="left:68px;top:106px;width:1px;height:676px;background:#fff;"></div>
<div class="a" style="left:31px;top:121px;width:8px;height:8px;border-radius:50%;background:radial-gradient(circle at 40% 40%,#c01818,#700000);"></div>
<div class="a" style="left:3px;top:133px;width:63px;height:26px;background:#f4f4f4;border:1px solid #000;box-shadow:inset -1px -1px #696969,inset 1px 1px #fff,inset -2px -2px #a8a8a8;"></div>
<div class="a" style="left:3px;top:165px;width:62px;height:47px;border:1px solid #a0a0a0;box-shadow:1px 1px #fff, inset 1px 1px #fff;"></div>
<div class="a" style="left:7px;top:175px;width:37px;height:19px;background:#fff;box-shadow:inset 1px 1px #a0a0a0,inset 2px 2px #696969,inset -1px -1px #fff,inset -2px -2px #e8e8e8;"></div>
<div class="a" style="left:47px;top:172px;width:16px;height:13px;background:#f4f4f4;box-shadow:inset -1px -1px #696969,inset 1px 1px #fff,inset -2px -2px #a8a8a8;"></div>
<div class="a" style="left:47px;top:185px;width:16px;height:13px;background:#f4f4f4;box-shadow:inset -1px -1px #696969,inset 1px 1px #fff,inset -2px -2px #a8a8a8;"></div>
<svg class="a" style="left:47px;top:172px" width="16" height="26" viewBox="0 0 16 26" shape-rendering="crispEdges"><polygon points="5.0,8.0 11.0,8.0 8.0,5.0" fill="#000" shape-rendering="auto"/><polygon points="5.0,18.0 11.0,18.0 8.0,21.0" fill="#000" shape-rendering="auto"/></svg>
<div class="a" style="left:3px;top:220px;width:62px;height:47px;border:1px solid #a0a0a0;box-shadow:1px 1px #fff, inset 1px 1px #fff;"></div>
<div class="a" style="left:7px;top:231px;width:37px;height:18px;background:#fff;box-shadow:inset 1px 1px #a0a0a0,inset 2px 2px #696969,inset -1px -1px #fff,inset -2px -2px #e8e8e8;"></div>
<div class="a" style="left:47px;top:227px;width:16px;height:13px;background:#f4f4f4;box-shadow:inset -1px -1px #696969,inset 1px 1px #fff,inset -2px -2px #a8a8a8;"></div>
<div class="a" style="left:47px;top:240px;width:16px;height:13px;background:#f4f4f4;box-shadow:inset -1px -1px #696969,inset 1px 1px #fff,inset -2px -2px #a8a8a8;"></div>
<svg class="a" style="left:47px;top:227px" width="16" height="26" viewBox="0 0 16 26" shape-rendering="crispEdges"><polygon points="5.0,8.0 11.0,8.0 8.0,5.0" fill="#000" shape-rendering="auto"/><polygon points="5.0,18.0 11.0,18.0 8.0,21.0" fill="#000" shape-rendering="auto"/></svg>
<div class="a" style="left:3px;top:275px;width:62px;height:125px;border:1px solid #a0a0a0;box-shadow:1px 1px #fff, inset 1px 1px #fff;"></div>
<div class="a" style="left:12px;top:284px;width:45px;height:15px;background:#fafafa;box-shadow:inset 1px 1px #696969,inset 2px 2px #a8a8a8,inset -1px -1px #fff;"></div>
<div class="a" style="left:12px;top:300px;width:45px;height:16px;background:#f4f4f4;box-shadow:inset -1px -1px #696969,inset 1px 1px #fff,inset -2px -2px #a8a8a8;"></div>
<div class="a" style="left:12px;top:316px;width:45px;height:16px;background:#f4f4f4;box-shadow:inset -1px -1px #696969,inset 1px 1px #fff,inset -2px -2px #a8a8a8;"></div>
<div class="a" style="left:12px;top:333px;width:45px;height:16px;background:#f4f4f4;box-shadow:inset -1px -1px #696969,inset 1px 1px #fff,inset -2px -2px #a8a8a8;"></div>
<div class="a" style="left:12px;top:349px;width:45px;height:16px;background:#f4f4f4;box-shadow:inset -1px -1px #696969,inset 1px 1px #fff,inset -2px -2px #a8a8a8;"></div>
<div class="a" style="left:12px;top:365px;width:45px;height:16px;background:#f4f4f4;box-shadow:inset -1px -1px #696969,inset 1px 1px #fff,inset -2px -2px #a8a8a8;"></div>
<div class="a" style="left:12px;top:381px;width:45px;height:16px;background:#f4f4f4;box-shadow:inset -1px -1px #696969,inset 1px 1px #fff,inset -2px -2px #a8a8a8;"></div>
<div class="a" style="left:3px;top:401px;width:63px;height:35px;background:#f4f4f4;box-shadow:inset -1px -1px #696969,inset 1px 1px #fff,inset -2px -2px #a8a8a8;"></div>
<div class="a" style="left:7px;top:402px;width:56px;height:31px;background:#f4f4f4;box-shadow:inset -1px -1px #696969,inset 1px 1px #fff,inset -2px -2px #a8a8a8;"></div>
<div class="a" style="left:0px;top:438px;width:68px;height:1px;background:#a0a0a0;"></div>
<div class="a" style="left:0px;top:439px;width:68px;height:1px;background:#fff;"></div>
<div class="a" style="left:0px;top:782px;width:69px;height:1px;background:#a0a0a0;"></div>
<div class="a" style="left:1349px;top:106px;width:91px;height:676px;background:#f4f4f4;"></div>
<div class="a" style="left:1349px;top:106px;width:1px;height:676px;background:#fff;"></div>
<div class="a" style="left:1354px;top:130px;width:83px;height:36px;border:1px solid #a0a0a0;box-shadow:1px 1px #fff, inset 1px 1px #fff;"></div>
<div class="a" style="left:1356px;top:139px;width:14px;height:12px;background:#f4f4f4;box-shadow:inset -1px -1px #696969,inset 1px 1px #fff,inset -2px -2px #a8a8a8;"></div>
<div class="a" style="left:1356px;top:151px;width:14px;height:13px;background:#f4f4f4;box-shadow:inset -1px -1px #696969,inset 1px 1px #fff,inset -2px -2px #a8a8a8;"></div>
<svg class="a" style="left:1356px;top:139px" width="14" height="25" viewBox="0 0 14 25" shape-rendering="crispEdges"><polygon points="4.0,7.5 10.0,7.5 7.0,4.5" fill="#000" shape-rendering="auto"/><polygon points="4.0,17.0 10.0,17.0 7.0,20.0" fill="#000" shape-rendering="auto"/></svg>
<div class="a" style="left:1370px;top:142px;width:63px;height:19px;background:#fff;box-shadow:inset 1px 1px #a0a0a0,inset 2px 2px #696969,inset -1px -1px #fff,inset -2px -2px #e8e8e8;"></div>
<div class="a" style="left:1354px;top:177px;width:83px;height:36px;border:1px solid #a0a0a0;box-shadow:1px 1px #fff, inset 1px 1px #fff;"></div>
<div class="a" style="left:1356px;top:186px;width:14px;height:12px;background:#f4f4f4;box-shadow:inset -1px -1px #696969,inset 1px 1px #fff,inset -2px -2px #a8a8a8;"></div>
<div class="a" style="left:1356px;top:198px;width:14px;height:13px;background:#f4f4f4;box-shadow:inset -1px -1px #696969,inset 1px 1px #fff,inset -2px -2px #a8a8a8;"></div>
<svg class="a" style="left:1356px;top:186px" width="14" height="25" viewBox="0 0 14 25" shape-rendering="crispEdges"><polygon points="4.0,7.5 10.0,7.5 7.0,4.5" fill="#000" shape-rendering="auto"/><polygon points="4.0,17.0 10.0,17.0 7.0,20.0" fill="#000" shape-rendering="auto"/></svg>
<div class="a" style="left:1370px;top:189px;width:63px;height:19px;background:#fff;box-shadow:inset 1px 1px #a0a0a0,inset 2px 2px #696969,inset -1px -1px #fff,inset -2px -2px #e8e8e8;"></div>
<div class="a" style="left:1354px;top:230px;width:83px;height:36px;border:1px solid #a0a0a0;box-shadow:1px 1px #fff, inset 1px 1px #fff;"></div>
<div class="a" style="left:1356px;top:239px;width:14px;height:12px;background:#f4f4f4;box-shadow:inset -1px -1px #696969,inset 1px 1px #fff,inset -2px -2px #a8a8a8;"></div>
<div class="a" style="left:1356px;top:251px;width:14px;height:13px;background:#f4f4f4;box-shadow:inset -1px -1px #696969,inset 1px 1px #fff,inset -2px -2px #a8a8a8;"></div>
<svg class="a" style="left:1356px;top:239px" width="14" height="25" viewBox="0 0 14 25" shape-rendering="crispEdges"><polygon points="4.0,7.5 10.0,7.5 7.0,4.5" fill="#000" shape-rendering="auto"/><polygon points="4.0,17.0 10.0,17.0 7.0,20.0" fill="#000" shape-rendering="auto"/></svg>
<div class="a" style="left:1370px;top:242px;width:63px;height:19px;background:#fff;box-shadow:inset 1px 1px #a0a0a0,inset 2px 2px #696969,inset -1px -1px #fff,inset -2px -2px #e8e8e8;"></div>
<div class="a" style="left:1354px;top:278px;width:83px;height:36px;border:1px solid #a0a0a0;box-shadow:1px 1px #fff, inset 1px 1px #fff;"></div>
<div class="a" style="left:1356px;top:287px;width:14px;height:12px;background:#f4f4f4;box-shadow:inset -1px -1px #696969,inset 1px 1px #fff,inset -2px -2px #a8a8a8;"></div>
<div class="a" style="left:1356px;top:299px;width:14px;height:13px;background:#f4f4f4;box-shadow:inset -1px -1px #696969,inset 1px 1px #fff,inset -2px -2px #a8a8a8;"></div>
<svg class="a" style="left:1356px;top:287px" width="14" height="25" viewBox="0 0 14 25" shape-rendering="crispEdges"><polygon points="4.0,7.5 10.0,7.5 7.0,4.5" fill="#000" shape-rendering="auto"/><polygon points="4.0,17.0 10.0,17.0 7.0,20.0" fill="#000" shape-rendering="auto"/></svg>
<div class="a" style="left:1370px;top:290px;width:63px;height:19px;background:#fff;box-shadow:inset 1px 1px #a0a0a0,inset 2px 2px #696969,inset -1px -1px #fff,inset -2px -2px #e8e8e8;"></div>
<div class="a" style="left:1355px;top:338px;width:81px;height:19px;background:#fff;box-shadow:inset 1px 1px #a0a0a0,inset 2px 2px #696969,inset -1px -1px #fff,inset -2px -2px #e8e8e8;"></div>
<div class="a" style="left:1419px;top:339px;width:16px;height:16px;background:#f4f4f4;box-shadow:inset -1px -1px #696969,inset 1px 1px #fff,inset -2px -2px #a8a8a8;"></div>
<svg class="a" style="left:1419px;top:339px" width="16" height="16" viewBox="0 0 16 16" shape-rendering="crispEdges"><polygon points="4,6.5 12,6.5 8,10.5" fill="#000" shape-rendering="auto"/></svg>
<div class="a" style="left:1355px;top:377px;width:81px;height:19px;background:#fff;box-shadow:inset 1px 1px #a0a0a0,inset 2px 2px #696969,inset -1px -1px #fff,inset -2px -2px #e8e8e8;"></div>
<div class="a" style="left:1419px;top:378px;width:16px;height:16px;background:#f4f4f4;box-shadow:inset -1px -1px #696969,inset 1px 1px #fff,inset -2px -2px #a8a8a8;"></div>
<svg class="a" style="left:1419px;top:378px" width="16" height="16" viewBox="0 0 16 16" shape-rendering="crispEdges"><polygon points="4,6.5 12,6.5 8,10.5" fill="#000" shape-rendering="auto"/></svg>
<div class="a" style="left:1355px;top:414px;width:81px;height:19px;background:#fff;box-shadow:inset 1px 1px #a0a0a0,inset 2px 2px #696969,inset -1px -1px #fff,inset -2px -2px #e8e8e8;"></div>
<div class="a" style="left:1351px;top:438px;width:89px;height:1px;background:#a0a0a0;"></div>
<div class="a" style="left:1351px;top:439px;width:89px;height:1px;background:#fff;"></div>
<div class="a" style="left:1349px;top:782px;width:91px;height:1px;background:#a0a0a0;"></div>
<div class="a" style="left:0px;top:783px;width:1440px;height:67px;background:#f4f4f4;"></div>
<div class="a" style="left:69px;top:783px;width:630px;height:67px;background:#fff;"></div>
<div class="a" style="left:712px;top:784px;width:1px;height:66px;background:#a0a0a0;"></div>
<div class="a" style="left:713px;top:784px;width:1px;height:66px;background:#fff;"></div>
<div class="a" style="left:69px;top:782px;width:1280px;height:1px;background:#fff;"></div>
<div class="a" style="left:0px;top:850px;width:1440px;height:1px;background:#a0a0a0;"></div>
<div class="a" style="left:0px;top:851px;width:1440px;height:1px;background:#fff;"></div>
<div class="a" style="left:1175px;top:854px;width:154px;height:14px;box-shadow:inset 1px 1px #a0a0a0,inset -1px -1px #fff;"></div>
<div class="a" style="left:1332px;top:854px;width:26px;height:14px;box-shadow:inset 1px 1px #a0a0a0,inset -1px -1px #fff;"></div>
<div class="a" style="left:1360px;top:854px;width:27px;height:14px;box-shadow:inset 1px 1px #a0a0a0,inset -1px -1px #fff;"></div>
<div class="a" style="left:1390px;top:854px;width:30px;height:14px;box-shadow:inset 1px 1px #a0a0a0,inset -1px -1px #fff;"></div>
<svg class="a" style="left:1424px;top:852px" width="16" height="14" viewBox="0 0 16 14"><path d="M15,3 L4,14 M15,7 L8,14 M15,11 L12,14" stroke="#a0a0a0" stroke-width="1"/><path d="M15,4 L5,14 M15,8 L9,14 M15,12 L13,14" stroke="#fff" stroke-width="1"/></svg>
<div class="t" style='left:24.00px;top:7.42px;font:normal bold 12.5px "Liberation Sans", sans-serif;line-height:12.5px;color:#fff;letter-spacing:-0.386px;'>Untitled Project - TrueRTA</div>
<div class="t" style='left:6.30px;top:28.69px;font:normal normal 11px "Liberation Sans", sans-serif;line-height:11px;color:#000;'>File</div>
<div class="t" style='left:33.30px;top:28.69px;font:normal normal 11px "Liberation Sans", sans-serif;line-height:11px;color:#000;'>Edit</div>
<div class="t" style='left:63.30px;top:28.69px;font:normal normal 11px "Liberation Sans", sans-serif;line-height:11px;color:#000;'>View</div>
<div class="t" style='left:97.30px;top:28.69px;font:normal normal 11px "Liberation Sans", sans-serif;line-height:11px;color:#000;'>Generator</div>
<div class="t" style='left:158.30px;top:28.69px;font:normal normal 11px "Liberation Sans", sans-serif;line-height:11px;color:#000;'>Audio I/O</div>
<div class="t" style='left:216.30px;top:28.69px;font:normal normal 11px "Liberation Sans", sans-serif;line-height:11px;color:#000;'>Oscilloscope</div>
<div class="t" style='left:286.30px;top:28.69px;font:normal normal 11px "Liberation Sans", sans-serif;line-height:11px;color:#000;'>Spectrum Analyzer</div>
<div class="t" style='left:388.30px;top:28.69px;font:normal normal 11px "Liberation Sans", sans-serif;line-height:11px;color:#000;'>Metering</div>
<div class="t" style='left:442.30px;top:28.69px;font:normal normal 11px "Liberation Sans", sans-serif;line-height:11px;color:#000;'>Utilities</div>
<div class="t" style='left:487.30px;top:28.69px;font:normal normal 11px "Liberation Sans", sans-serif;line-height:11px;color:#000;'>Help</div>
<div class="t" style='left:90.64px;top:108.19px;font:normal bold 11px "Liberation Sans", sans-serif;line-height:11px;color:#dcdcdc;-webkit-text-stroke:0.3px #dcdcdc;'>130</div>
<div class="t" style='left:71.50px;top:117.19px;font:normal bold 11px "Liberation Sans", sans-serif;line-height:11px;color:#dcdcdc;letter-spacing:-0.325px;-webkit-text-stroke:0.3px #dcdcdc;'>dB SPL</div>
<div class="t" style='left:90.64px;top:145.61px;font:normal bold 11px "Liberation Sans", sans-serif;line-height:11px;color:#dcdcdc;-webkit-text-stroke:0.3px #dcdcdc;'>125</div>
<div class="t" style='left:90.64px;top:186.74px;font:normal bold 11px "Liberation Sans", sans-serif;line-height:11px;color:#dcdcdc;-webkit-text-stroke:0.3px #dcdcdc;'>120</div>
<div class="t" style='left:91.25px;top:227.86px;font:normal bold 11px "Liberation Sans", sans-serif;line-height:11px;color:#dcdcdc;-webkit-text-stroke:0.3px #dcdcdc;'>115</div>
<div class="t" style='left:91.25px;top:268.99px;font:normal bold 11px "Liberation Sans", sans-serif;line-height:11px;color:#dcdcdc;-webkit-text-stroke:0.3px #dcdcdc;'>110</div>
<div class="t" style='left:90.64px;top:310.11px;font:normal bold 11px "Liberation Sans", sans-serif;line-height:11px;color:#dcdcdc;-webkit-text-stroke:0.3px #dcdcdc;'>105</div>
<div class="t" style='left:90.64px;top:351.24px;font:normal bold 11px "Liberation Sans", sans-serif;line-height:11px;color:#dcdcdc;-webkit-text-stroke:0.3px #dcdcdc;'>100</div>
<div class="t" style='left:96.75px;top:392.36px;font:normal bold 11px "Liberation Sans", sans-serif;line-height:11px;color:#dcdcdc;-webkit-text-stroke:0.3px #dcdcdc;'>95</div>
<div class="t" style='left:96.75px;top:433.49px;font:normal bold 11px "Liberation Sans", sans-serif;line-height:11px;color:#dcdcdc;-webkit-text-stroke:0.3px #dcdcdc;'>90</div>
<div class="t" style='left:96.75px;top:474.61px;font:normal bold 11px "Liberation Sans", sans-serif;line-height:11px;color:#dcdcdc;-webkit-text-stroke:0.3px #dcdcdc;'>85</div>
<div class="t" style='left:96.75px;top:515.74px;font:normal bold 11px "Liberation Sans", sans-serif;line-height:11px;color:#dcdcdc;-webkit-text-stroke:0.3px #dcdcdc;'>80</div>
<div class="t" style='left:96.75px;top:556.86px;font:normal bold 11px "Liberation Sans", sans-serif;line-height:11px;color:#dcdcdc;-webkit-text-stroke:0.3px #dcdcdc;'>75</div>
<div class="t" style='left:96.75px;top:597.99px;font:normal bold 11px "Liberation Sans", sans-serif;line-height:11px;color:#dcdcdc;-webkit-text-stroke:0.3px #dcdcdc;'>70</div>
<div class="t" style='left:96.75px;top:639.11px;font:normal bold 11px "Liberation Sans", sans-serif;line-height:11px;color:#dcdcdc;-webkit-text-stroke:0.3px #dcdcdc;'>65</div>
<div class="t" style='left:96.75px;top:680.24px;font:normal bold 11px "Liberation Sans", sans-serif;line-height:11px;color:#dcdcdc;-webkit-text-stroke:0.3px #dcdcdc;'>60</div>
<div class="t" style='left:96.75px;top:721.36px;font:normal bold 11px "Liberation Sans", sans-serif;line-height:11px;color:#dcdcdc;-webkit-text-stroke:0.3px #dcdcdc;'>55</div>
<div class="t" style='left:96.75px;top:760.19px;font:normal bold 11px "Liberation Sans", sans-serif;line-height:11px;color:#dcdcdc;-webkit-text-stroke:0.3px #dcdcdc;'>50</div>
<div class="t" style='left:101.32px;top:770.99px;font:normal bold 11px "Liberation Sans", sans-serif;line-height:11px;color:#dcdcdc;-webkit-text-stroke:0.3px #dcdcdc;'>200</div>
<div class="t" style='left:345.32px;top:770.99px;font:normal bold 11px "Liberation Sans", sans-serif;line-height:11px;color:#dcdcdc;-webkit-text-stroke:0.3px #dcdcdc;'>500</div>
<div class="t" style='left:525.66px;top:770.99px;font:normal bold 11px "Liberation Sans", sans-serif;line-height:11px;color:#dcdcdc;-webkit-text-stroke:0.3px #dcdcdc;'>1kHz</div>
<div class="t" style='left:716.88px;top:770.99px;font:normal bold 11px "Liberation Sans", sans-serif;line-height:11px;color:#dcdcdc;-webkit-text-stroke:0.3px #dcdcdc;'>2k</div>
<div class="t" style='left:959.88px;top:770.99px;font:normal bold 11px "Liberation Sans", sans-serif;line-height:11px;color:#dcdcdc;-webkit-text-stroke:0.3px #dcdcdc;'>5k</div>
<div class="t" style='left:1141.82px;top:770.99px;font:normal bold 11px "Liberation Sans", sans-serif;line-height:11px;color:#dcdcdc;-webkit-text-stroke:0.3px #dcdcdc;'>10k</div>
<div class="t" style='left:1326.82px;top:770.99px;font:normal bold 11px "Liberation Sans", sans-serif;line-height:11px;color:#dcdcdc;-webkit-text-stroke:0.3px #dcdcdc;'>20k</div>
<div class="t" style='left:116.00px;top:109.68px;font:normal normal 30.5px "Liberation Sans", sans-serif;line-height:30.5px;color:#dcdcdc;'>163.77</div>
<div class="t" style='left:220.00px;top:110.84px;font:normal normal 12px "Liberation Sans", sans-serif;line-height:12px;color:#dcdcdc;'>Input Level</div>
<div class="t" style='left:220.00px;top:124.84px;font:normal normal 12px "Liberation Sans", sans-serif;line-height:12px;color:#dcdcdc;'>mV rms</div>
<div class="t" style='left:116.00px;top:140.68px;font:normal normal 30.5px "Liberation Sans", sans-serif;line-height:30.5px;color:#dcdcdc;'>122.03</div>
<div class="t" style='left:220.00px;top:141.84px;font:normal normal 12px "Liberation Sans", sans-serif;line-height:12px;color:#dcdcdc;'>Input Level</div>
<div class="t" style='left:220.00px;top:155.84px;font:normal normal 12px "Liberation Sans", sans-serif;line-height:12px;color:#dcdcdc;'>dB SPL pk</div>
<div class="t" style='left:116.00px;top:171.68px;font:normal normal 30.5px "Liberation Sans", sans-serif;line-height:30.5px;color:#dcdcdc;'>108.34</div>
<div class="t" style='left:220.00px;top:172.84px;font:normal normal 12px "Liberation Sans", sans-serif;line-height:12px;color:#dcdcdc;'>Input Level</div>
<div class="t" style='left:220.00px;top:186.84px;font:normal normal 12px "Liberation Sans", sans-serif;line-height:12px;color:#dcdcdc;'>dB SPL avg</div>
<div class="t" style='left:453.00px;top:109.68px;font:normal normal 30.5px "Liberation Sans", sans-serif;line-height:30.5px;color:#dcdcdc;'>4.8397</div>
<div class="t" style='left:550.00px;top:110.84px;font:normal normal 12px "Liberation Sans", sans-serif;line-height:12px;color:#dcdcdc;'>Crest Factor</div>
<div class="t" style='left:550.00px;top:124.84px;font:normal normal 12px "Liberation Sans", sans-serif;line-height:12px;color:#dcdcdc;'>mV/mV</div>
<div class="t" style='left:453.00px;top:140.68px;font:normal normal 30.5px "Liberation Sans", sans-serif;line-height:30.5px;color:#dcdcdc;'>13.696</div>
<div class="t" style='left:550.00px;top:141.84px;font:normal normal 12px "Liberation Sans", sans-serif;line-height:12px;color:#dcdcdc;'>Crest Factor</div>
<div class="t" style='left:550.00px;top:155.84px;font:normal normal 12px "Liberation Sans", sans-serif;line-height:12px;color:#dcdcdc;'>dB</div>
<div class="t" style='left:1247.00px;top:111.22px;font:normal normal 21px "Liberation Serif", serif;line-height:21px;color:#e4e4e4;letter-spacing:0.198px;'>True</div>
<div class="t" style='left:1289.00px;top:111.65px;font:italic bold 20.5px "Liberation Sans", sans-serif;line-height:20.5px;color:#f41040;letter-spacing:0.875px;-webkit-text-stroke:1px #f41040;'>RTA</div>
<div class="t" style='left:5.50px;top:108.69px;font:normal normal 11px "Liberation Sans", sans-serif;line-height:11px;color:#000;letter-spacing:-0.331px;'>- Generator -</div>
<div class="t" style='left:18.16px;top:140.27px;font:normal normal 11.5px "Liberation Sans", sans-serif;line-height:11.5px;color:#000;'>On/Off</div>
<div class="t" style='left:13.00px;top:160.39px;font:normal normal 11px "Liberation Sans", sans-serif;line-height:11px;color:#000;letter-spacing:-0.797px;background:#f4f4f4;padding:0 2px;margin-left:-2px;'>Freq.</div>
<div class="t" style='left:28.70px;top:179.27px;font:normal normal 11.5px "Liberation Sans", sans-serif;line-height:11.5px;color:#000;'>20</div>
<div class="t" style='left:12.00px;top:197.69px;font:normal normal 11px "Liberation Sans", sans-serif;line-height:11px;color:#000;letter-spacing:-0.482px;'>(in Hz)</div>
<div class="t" style='left:12.00px;top:215.39px;font:normal normal 11px "Liberation Sans", sans-serif;line-height:11px;color:#000;letter-spacing:-0.781px;background:#f4f4f4;padding:0 2px;margin-left:-2px;'>Ampl.</div>
<div class="t" style='left:15.28px;top:233.97px;font:normal normal 11.5px "Liberation Sans", sans-serif;line-height:11.5px;color:#000;'>-10.0</div>
<div class="t" style='left:8.00px;top:252.69px;font:normal normal 11px "Liberation Sans", sans-serif;line-height:11px;color:#000;letter-spacing:-0.504px;'>(in dBu)</div>
<div class="t" style='left:12.00px;top:270.39px;font:normal normal 11px "Liberation Sans", sans-serif;line-height:11px;color:#000;letter-spacing:0.427px;background:#f4f4f4;padding:0 2px;margin-left:-2px;'>Wave</div>
<div class="t" style='left:22.98px;top:286.27px;font:normal normal 11.5px "Liberation Sans", sans-serif;line-height:11.5px;color:#000;'>Sine</div>
<div class="t" style='left:15.95px;top:302.27px;font:normal normal 11.5px "Liberation Sans", sans-serif;line-height:11.5px;color:#000;'>Square</div>
<div class="t" style='left:13.94px;top:318.27px;font:normal normal 11.5px "Liberation Sans", sans-serif;line-height:11.5px;color:#000;'>Triangle</div>
<div class="t" style='left:23.31px;top:335.27px;font:normal normal 11.5px "Liberation Sans", sans-serif;line-height:11.5px;color:#000;'>Saw</div>
<div class="t" style='left:14.36px;top:351.27px;font:normal normal 11.5px "Liberation Sans", sans-serif;line-height:11.5px;color:#000;'>Impulse</div>
<div class="t" style='left:17.56px;top:367.27px;font:normal normal 11.5px "Liberation Sans", sans-serif;line-height:11.5px;color:#000;'>Pink N</div>
<div class="t" style='left:14.05px;top:383.27px;font:normal normal 11.5px "Liberation Sans", sans-serif;line-height:11.5px;color:#000;'>White N</div>
<div class="t" style='left:20.30px;top:404.47px;font:normal normal 11.5px "Liberation Sans", sans-serif;line-height:11.5px;color:#000;'>Quick</div>
<div class="t" style='left:17.41px;top:417.87px;font:normal normal 11.5px "Liberation Sans", sans-serif;line-height:11.5px;color:#000;'>Sweep</div>
<div class="t" style='left:1369.75px;top:108.69px;font:normal normal 11px "Liberation Sans", sans-serif;line-height:11px;color:#000;letter-spacing:-0.376px;'>- Analyzer -</div>
<div class="t" style='left:1364.00px;top:124.49px;font:normal normal 11px "Liberation Sans", sans-serif;line-height:11px;color:#000;letter-spacing:-0.013px;background:#f4f4f4;padding:0 2px;margin-left:-2px;'>dB Top</div>
<div class="t" style='left:1373.50px;top:145.57px;font:normal normal 11.5px "Liberation Sans", sans-serif;line-height:11.5px;color:#000;letter-spacing:-0.599px;'>130 dB SPL</div>
<div class="t" style='left:1364.00px;top:171.49px;font:normal normal 11px "Liberation Sans", sans-serif;line-height:11px;color:#000;letter-spacing:-0.357px;background:#f4f4f4;padding:0 2px;margin-left:-2px;'>dB Bottom</div>
<div class="t" style='left:1373.50px;top:192.57px;font:normal normal 11.5px "Liberation Sans", sans-serif;line-height:11.5px;color:#000;letter-spacing:-0.623px;'>50 dB SPL</div>
<div class="t" style='left:1364.00px;top:224.49px;font:normal normal 11px "Liberation Sans", sans-serif;line-height:11px;color:#000;letter-spacing:-0.362px;background:#f4f4f4;padding:0 2px;margin-left:-2px;'>Hi Freq Limit</div>
<div class="t" style='left:1373.50px;top:245.57px;font:normal normal 11.5px "Liberation Sans", sans-serif;line-height:11.5px;color:#000;letter-spacing:-0.159px;'>20 kHz</div>
<div class="t" style='left:1364.00px;top:272.49px;font:normal normal 11px "Liberation Sans", sans-serif;line-height:11px;color:#000;letter-spacing:-0.350px;background:#f4f4f4;padding:0 2px;margin-left:-2px;'>Lo Freq Limit</div>
<div class="t" style='left:1373.50px;top:293.57px;font:normal normal 11.5px "Liberation Sans", sans-serif;line-height:11.5px;color:#000;letter-spacing:-0.087px;'>200 Hz</div>
<div class="t" style='left:1354.50px;top:324.29px;font:normal normal 11px "Liberation Sans", sans-serif;line-height:11px;color:#000;letter-spacing:-0.141px;'>RTA Resolution:</div>
<div class="t" style='left:1358.50px;top:342.27px;font:normal normal 11.5px "Liberation Sans", sans-serif;line-height:11.5px;color:#000;letter-spacing:-0.334px;'>1/12 Oct.</div>
<div class="t" style='left:1354.50px;top:363.39px;font:normal normal 11px "Liberation Sans", sans-serif;line-height:11px;color:#000;letter-spacing:-0.150px;'>Speed Tradeoff:</div>
<div class="t" style='left:1358.50px;top:381.27px;font:normal normal 11.5px "Liberation Sans", sans-serif;line-height:11.5px;color:#000;letter-spacing:-0.494px;'>80 Hz (fast)</div>
<div class="t" style='left:1354.50px;top:401.99px;font:normal normal 11px "Liberation Sans", sans-serif;line-height:11px;color:#000;letter-spacing:-0.166px;'>Averages:</div>
<div class="t" style='left:1428.09px;top:418.27px;font:normal normal 11.5px "Liberation Sans", sans-serif;line-height:11.5px;color:#000;'>5</div>
<div class="t" style='left:33.50px;top:785.19px;font:normal normal 11px "Liberation Sans", sans-serif;line-height:11px;color:#000;letter-spacing:-0.459px;'>Notes:</div>
<div class="t" style='left:70.00px;top:785.19px;font:normal normal 11px "Liberation Sans", sans-serif;line-height:11px;color:#000;letter-spacing:-0.204px;'>.1. Project Filename: Untitled Project</div>
<div class="t" style='left:70.00px;top:798.19px;font:normal normal 11px "Liberation Sans", sans-serif;line-height:11px;color:#000;letter-spacing:-0.254px;'>.2. Mic Cal File: Mic Correction was OFF</div>
<div class="t" style='left:70.00px;top:811.19px;font:normal normal 11px "Liberation Sans", sans-serif;line-height:11px;color:#000;letter-spacing:-0.244px;'>.3. House Curve File: House Curve was OFF</div>
<div class="t" style='left:70.00px;top:824.19px;font:normal normal 11px "Liberation Sans", sans-serif;line-height:11px;color:#000;letter-spacing:-0.189px;'>.4. Data was acquired manually</div>
<div class="t" style='left:70.00px;top:837.19px;font:normal normal 11px "Liberation Sans", sans-serif;line-height:11px;color:#000;letter-spacing:-0.298px;'>.5. Sound System Correction: OFF</div>
<div class="t" style='left:261.00px;top:785.19px;font:normal normal 11px "Liberation Sans", sans-serif;line-height:11px;color:#000;letter-spacing:-0.130px;'>Data acquired: 4Aug2011, 6:15 PM</div>
<div class="t" style='left:309.00px;top:798.19px;font:normal normal 11px "Liberation Sans", sans-serif;line-height:11px;color:#000;letter-spacing:-0.143px;'>Input f(s) = 44.1 kHz</div>
<div class="t" style='left:357.50px;top:811.19px;font:normal normal 11px "Liberation Sans", sans-serif;line-height:11px;color:#000;letter-spacing:-0.232px;'>FFT Size = 16 k</div>
<div class="t" style='left:309.00px;top:824.19px;font:normal normal 11px "Liberation Sans", sans-serif;line-height:11px;color:#000;letter-spacing:-0.119px;'>Input Selection: L</div>
<div class="t" style='left:309.00px;top:837.19px;font:normal normal 11px "Liberation Sans", sans-serif;line-height:11px;color:#000;letter-spacing:-0.194px;'>Relative Mode:  OFF</div>
<div class="t" style='left:453.00px;top:798.19px;font:normal normal 11px "Liberation Sans", sans-serif;line-height:11px;color:#000;letter-spacing:-0.186px;'>Output f(s) = 44.1 kHz</div>
<div class="t" style='left:453.00px;top:824.19px;font:normal normal 11px "Liberation Sans", sans-serif;line-height:11px;color:#000;letter-spacing:-0.096px;'>No. of Averages = 5</div>
<div class="t" style='left:453.00px;top:837.19px;font:normal normal 11px "Liberation Sans", sans-serif;line-height:11px;color:#000;letter-spacing:-0.258px;'>Peak Hold: OFF</div>
<div class="t" style='left:1.50px;top:856.69px;font:normal normal 11px "Liberation Sans", sans-serif;line-height:11px;color:#000;'>Use Alt+Space to start or stop input processing</div>
<div class="t" style='left:1177.00px;top:856.69px;font:normal normal 11px "Liberation Sans", sans-serif;line-height:11px;color:#000;letter-spacing:-0.430px;'>Workbench</div>
<div class="t" style='left:1362.00px;top:856.69px;font:normal normal 11px "Liberation Sans", sans-serif;line-height:11px;color:#000;'>NUM</div>
<div class="a" style="left:0px;top:866px;width:1440px;height:34px;background:linear-gradient(#3a5a88 0px,#3a5a88 1px,#78aaf8 1px,#78aaf8 3px,#2a50b0 3px,#2a50b0 5px,#8aa0f0 5px,#8aa0f0 6px,#3a5aa8 6px,#38528e 12px,#34509e 13px,#24408a 22px,#182a6c 34px);"></div>
<div class="a" style="left:7px;top:869px;width:36px;height:36px;border-radius:50%;background:radial-gradient(circle at 50% 85%,#40c8f0 0%,#2a80b8 25%,#1a4a80 55%,#0a1a40 80%,#050a20 100%);box-shadow:0 0 0 1px #08102a;"></div>
<div class="a" style="left:11px;top:871px;width:28px;height:16px;border-radius:50% 50% 45% 45%;background:linear-gradient(rgba(200,225,245,0.75),rgba(120,160,200,0.15));"></div>
<svg class="a" style="left:14px;top:874px" width="22" height="22" viewBox="0 0 22 22">
<path d="M2,4 C4,2.5 7,2.5 10,4 L9,10.5 C6.5,9.2 4,9.2 1,10.5 Z" fill="#f0642a"/>
<path d="M11,4.3 C13.5,5.8 16.5,5.8 19,4.5 L18,11 C15.5,12.2 12.8,12.2 10,11 Z" fill="#78c040"/>
<path d="M1,11.5 C4,10.2 6.5,10.2 9,11.5 L8,18 C5.5,16.8 3,16.8 0,18 Z" fill="#30a0e8"/>
<path d="M10,12 C12.8,13.2 15.5,13.2 18,12 L17,18.5 C14.5,19.8 11.8,19.8 9,18.5 Z" fill="#f8c828"/>
</svg>
<div class="a" style="left:58px;top:874px;width:1px;height:1px;background:#a8b8d8;"></div>
<div class="a" style="left:61px;top:874px;width:1px;height:1px;background:#a8b8d8;"></div>
<div class="a" style="left:58px;top:879px;width:1px;height:1px;background:#a8b8d8;"></div>
<div class="a" style="left:61px;top:879px;width:1px;height:1px;background:#a8b8d8;"></div>
<div class="a" style="left:58px;top:884px;width:1px;height:1px;background:#a8b8d8;"></div>
<div class="a" style="left:61px;top:884px;width:1px;height:1px;background:#a8b8d8;"></div>
<div class="a" style="left:58px;top:889px;width:1px;height:1px;background:#a8b8d8;"></div>
<div class="a" style="left:61px;top:889px;width:1px;height:1px;background:#a8b8d8;"></div>
<div class="a" style="left:58px;top:894px;width:1px;height:1px;background:#a8b8d8;"></div>
<div class="a" style="left:61px;top:894px;width:1px;height:1px;background:#a8b8d8;"></div>
<div class="a" style="left:306px;top:874px;width:1px;height:1px;background:#a8b8d8;"></div>
<div class="a" style="left:309px;top:874px;width:1px;height:1px;background:#a8b8d8;"></div>
<div class="a" style="left:306px;top:879px;width:1px;height:1px;background:#a8b8d8;"></div>
<div class="a" style="left:309px;top:879px;width:1px;height:1px;background:#a8b8d8;"></div>
<div class="a" style="left:306px;top:884px;width:1px;height:1px;background:#a8b8d8;"></div>
<div class="a" style="left:309px;top:884px;width:1px;height:1px;background:#a8b8d8;"></div>
<div class="a" style="left:306px;top:889px;width:1px;height:1px;background:#a8b8d8;"></div>
<div class="a" style="left:309px;top:889px;width:1px;height:1px;background:#a8b8d8;"></div>
<div class="a" style="left:306px;top:894px;width:1px;height:1px;background:#a8b8d8;"></div>
<div class="a" style="left:309px;top:894px;width:1px;height:1px;background:#a8b8d8;"></div>
<div class="a" style="left:1299px;top:874px;width:1px;height:1px;background:#a8b8d8;"></div>
<div class="a" style="left:1302px;top:874px;width:1px;height:1px;background:#a8b8d8;"></div>
<div class="a" style="left:1299px;top:879px;width:1px;height:1px;background:#a8b8d8;"></div>
<div class="a" style="left:1302px;top:879px;width:1px;height:1px;background:#a8b8d8;"></div>
<div class="a" style="left:1299px;top:884px;width:1px;height:1px;background:#a8b8d8;"></div>
<div class="a" style="left:1302px;top:884px;width:1px;height:1px;background:#a8b8d8;"></div>
<div class="a" style="left:1299px;top:889px;width:1px;height:1px;background:#a8b8d8;"></div>
<div class="a" style="left:1302px;top:889px;width:1px;height:1px;background:#a8b8d8;"></div>
<div class="a" style="left:1299px;top:894px;width:1px;height:1px;background:#a8b8d8;"></div>
<div class="a" style="left:1302px;top:894px;width:1px;height:1px;background:#a8b8d8;"></div>

<svg class="a" style="left:70px;top:878px" width="16" height="15" viewBox="0 0 16 15"><rect x="0.5" y="0.5" width="15" height="12" fill="#3a70c8" stroke="#a8d0f0"/><rect x="2" y="2" width="12" height="5" fill="#6aa0e0"/><rect x="5" y="10" width="6" height="2" fill="#202020"/><rect x="3" y="13" width="10" height="2" fill="#c8d8f0"/></svg>
<svg class="a" style="left:93px;top:876px" width="17" height="17" viewBox="0 0 17 17"><circle cx="8.5" cy="9.5" r="6" fill="#2aa8f0"/><circle cx="8.5" cy="9.5" r="3" fill="#d8f0ff"/><rect x="5" y="9" width="8" height="1.5" fill="#2aa8f0"/><path d="M2,15 C0,12 6,3 15,1.5" fill="none" stroke="#e8c040" stroke-width="1.8"/></svg>
<svg class="a" style="left:115px;top:876px" width="17" height="17" viewBox="0 0 17 17"><path d="M3,6 L8,1 L12,5 L9,8 Z" fill="#e02020"/><rect x="5" y="6" width="8" height="7" fill="#f0d020"/><path d="M1,8 L5,6 L5,12 L1,14 Z" fill="#c01818"/><path d="M13,7 L16,9 L14,15 L11,13 Z" fill="#b01010"/><rect x="7" y="12" width="4" height="3" fill="#202020"/></svg>
<svg class="a" style="left:139px;top:877px" width="16" height="16" viewBox="0 0 16 16"><circle cx="8" cy="8" r="7" fill="#e8e0e0"/><circle cx="8" cy="7.5" r="5.5" fill="#d83030"/><path d="M5,6 L8,3 L11,6 M8,3 L8,13" stroke="#f8f0f0" stroke-width="1.3" fill="none"/></svg>
<svg class="a" style="left:161px;top:876px" width="17" height="17" viewBox="0 0 17 17"><rect x="0.5" y="0.5" width="16" height="15" fill="#a8dce8" stroke="#d0eef4"/><path d="M1,13 L5,8 L8,11 L11,7 L16,12 L16,15 L1,15 Z" fill="#e8f8f8"/><rect x="2" y="12" width="13" height="3" fill="#70b0c0"/></svg>
<svg class="a" style="left:185px;top:877px" width="16" height="16" viewBox="0 0 16 16"><circle cx="8" cy="8" r="7.2" fill="#3a2a08"/><circle cx="8" cy="8" r="6" fill="#f0c030"/><path d="M4,11 L8,4 L12,11 Z" fill="none" stroke="#5a3a08" stroke-width="1.5"/></svg>
<svg class="a" style="left:210px;top:878px" width="14" height="16" viewBox="0 0 14 16"><rect x="2.5" y="1.5" width="8" height="5" fill="#e8e850" stroke="#404010"/><rect x="5.5" y="6" width="2" height="5" fill="#e8e850" stroke="#404010" stroke-width="0.8"/><rect x="1" y="9.5" width="5" height="5" fill="#e8e850" stroke="#404010"/><rect x="8" y="9.5" width="5" height="5" fill="#e8e850" stroke="#404010"/></svg>
<svg class="a" style="left:231px;top:877px" width="17" height="16" viewBox="0 0 17 16"><circle cx="8.5" cy="8" r="7" fill="#3a6ac0"/><path d="M2,5 C2,13 10,16 14,12 C16,9 15,4 12,2 C13,6 10,9 7,8 C5,7 4,4 6,2 C4,2 2,3 2,5 Z" fill="#f07a20"/></svg>
<svg class="a" style="left:255px;top:877px" width="15" height="16" viewBox="0 0 15 16"><ellipse cx="7.5" cy="8" rx="7" ry="7.5" fill="#e01818"/><ellipse cx="7.5" cy="8" rx="2.5" ry="5" fill="#701010"/><ellipse cx="7.5" cy="8" rx="1.8" ry="4.3" fill="#f8e8e8" opacity="0.2"/></svg>
<svg class="a" style="left:277px;top:877px" width="16" height="16" viewBox="0 0 16 16"><circle cx="8" cy="8" r="7" fill="#e83a2a"/><path d="M8,8 L1.2,6.5 A7,7 0 0 0 6,14.7 Z" fill="#38a838"/><path d="M8,8 L6,14.7 A7,7 0 0 0 14.9,7 Z" fill="#f8c820"/><circle cx="8" cy="8" r="3.3" fill="#fff"/><circle cx="8" cy="8" r="2.3" fill="#3a80e0"/></svg>

<div class="a" style="left:317px;top:872px;width:158px;height:28px;background:linear-gradient(#1e3c9a,#2448b0 6px,#2a50b8 20px,#2448a8);border-radius:2px;box-shadow:inset 1px 1px #10206a;"></div>
<svg class="a" style="left:327px;top:878px" width="16" height="16" viewBox="0 0 15 15"><rect x="0" y="0" width="15" height="15" fill="#8a8f9a"/><rect x="1" y="1" width="13" height="13" fill="#000"/><line x1="7.5" y1="1" x2="7.5" y2="14" stroke="#6b5b4b" stroke-width="0.8"/><line x1="1" y1="7.5" x2="14" y2="7.5" stroke="#6b5b4b" stroke-width="0.8"/><path d="M0.5,8 C2,4 3.5,3.5 5,4.5 C7,6 8.5,10.5 10.5,10.5 C12,10.5 13,8.5 14.5,7.5" fill="none" stroke="#40e0d0" stroke-width="1.4"/></svg>
<div class="a" style="left:487px;top:878px;width:15px;height:13px;background:repeating-linear-gradient(#fff 0 2px,#a0a0b0 2px 3px);transform:skewX(-15deg);"></div><div class="a" style="left:492px;top:880px;width:4px;height:4px;background:#d02020;"></div>
<div class="a" style="left:647px;top:877px;width:14px;height:15px;border-radius:50%;background:radial-gradient(ellipse,#501010 22%,#e81818 38%,#b80000 90%);"></div>
<div class="a" style="left:1310px;top:891px;width:16px;height:2px;background:#2a6a8a;"></div>
<svg class="a" style="left:1340px;top:877px" width="16" height="16" viewBox="0 0 16 16"><ellipse cx="8" cy="3.6" rx="2.6" ry="3.4" fill="#7ad030" stroke="#3a8010" stroke-width="0.6" transform="rotate(0 8 8)"/><ellipse cx="8" cy="3.6" rx="2.6" ry="3.4" fill="#7ad030" stroke="#3a8010" stroke-width="0.6" transform="rotate(45 8 8)"/><ellipse cx="8" cy="3.6" rx="2.6" ry="3.4" fill="#7ad030" stroke="#3a8010" stroke-width="0.6" transform="rotate(90 8 8)"/><ellipse cx="8" cy="3.6" rx="2.6" ry="3.4" fill="#7ad030" stroke="#3a8010" stroke-width="0.6" transform="rotate(135 8 8)"/><ellipse cx="8" cy="3.6" rx="2.6" ry="3.4" fill="#7ad030" stroke="#3a8010" stroke-width="0.6" transform="rotate(180 8 8)"/><ellipse cx="8" cy="3.6" rx="2.6" ry="3.4" fill="#7ad030" stroke="#3a8010" stroke-width="0.6" transform="rotate(225 8 8)"/><ellipse cx="8" cy="3.6" rx="2.6" ry="3.4" fill="#7ad030" stroke="#3a8010" stroke-width="0.6" transform="rotate(270 8 8)"/><ellipse cx="8" cy="3.6" rx="2.6" ry="3.4" fill="#7ad030" stroke="#3a8010" stroke-width="0.6" transform="rotate(315 8 8)"/><circle cx="8" cy="8" r="2" fill="#f0e040"/></svg>
<svg class="a" style="left:1358px;top:877px" width="18" height="17" viewBox="0 0 18 17"><rect x="5" y="1" width="11" height="9" fill="#d8d8d0"/><rect x="6.5" y="2.5" width="8" height="6" fill="#707060"/><rect x="0" y="4" width="11" height="9" fill="#e0e0d8"/><rect x="1.5" y="5.5" width="8" height="6" fill="#8a8a78"/><rect x="3" y="5.5" width="5" height="3" fill="#c8c8b8"/><rect x="2" y="14" width="8" height="2" fill="#b8bcc8"/></svg>
<svg class="a" style="left:1376px;top:877px" width="18" height="17" viewBox="0 0 18 17"><rect x="5" y="1" width="11" height="9" fill="#d8d8d0"/><rect x="6.5" y="2.5" width="8" height="6" fill="#707060"/><rect x="0" y="4" width="11" height="9" fill="#e0e0d8"/><rect x="1.5" y="5.5" width="8" height="6" fill="#8a8a78"/><rect x="3" y="5.5" width="5" height="3" fill="#c8c8b8"/><rect x="2" y="14" width="8" height="2" fill="#b8bcc8"/></svg>

<div class="t" style='left:347.00px;top:879.84px;font:normal normal 12px "Liberation Sans", sans-serif;line-height:12px;color:#fff;letter-spacing:0.026px;'>Untitled Project - Tru...</div>
<div class="t" style='left:506.00px;top:879.84px;font:normal normal 12px "Liberation Sans", sans-serif;line-height:12px;color:#fff;letter-spacing:-0.022px;'>focal TN53K.jpg - П...</div>
<div class="t" style='left:666.00px;top:879.84px;font:normal normal 12px "Liberation Sans", sans-serif;line-height:12px;color:#fff;letter-spacing:0.107px;'>Экспресс-панель - ...</div>
<div class="t" style='left:1311.50px;top:880.69px;font:normal normal 11px "Liberation Sans", sans-serif;line-height:11px;color:#e8f4ff;letter-spacing:-2.781px;'>EN</div>
<div class="t" style='left:1399.00px;top:879.34px;font:normal normal 12px "Liberation Sans", sans-serif;line-height:12px;color:#fff;letter-spacing:0.242px;'>18:16</div>
<div class="t" style='left:9.00px;top:883.69px;font:normal normal 11px "Liberation Mono", monospace;line-height:11px;color:rgba(180,210,240,0.5);letter-spacing:0.459px;'>MAGNITOLA.ORG  L.RU  TNE</div>
</body></html>
